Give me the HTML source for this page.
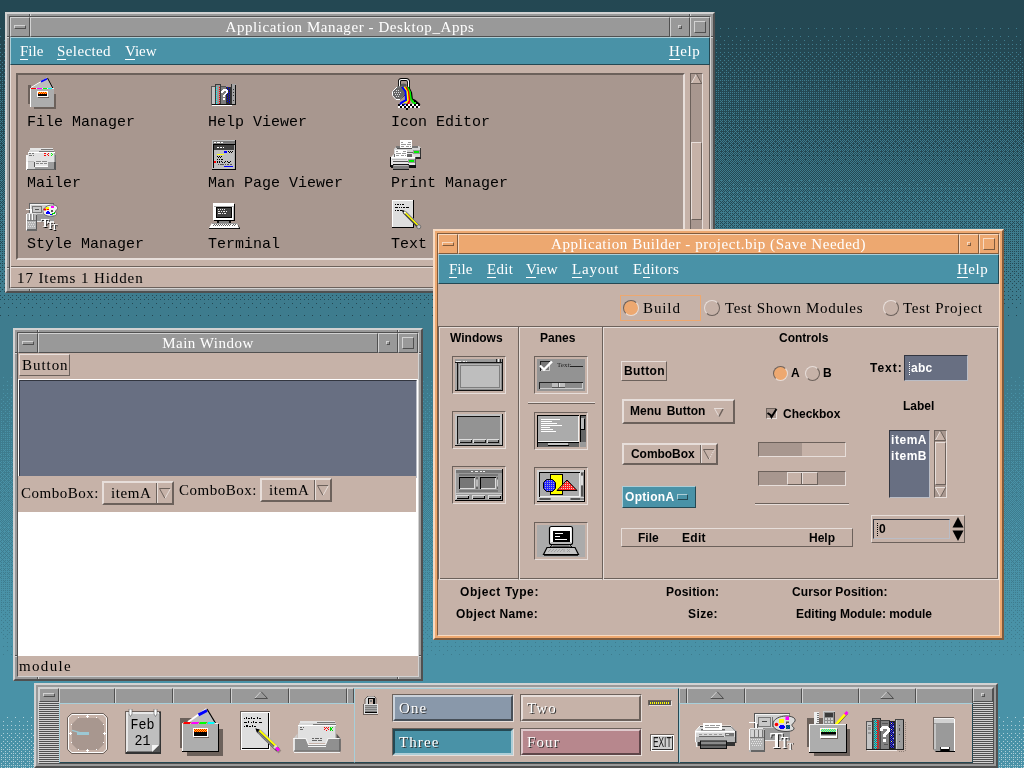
<!DOCTYPE html>
<html lang="en">
<head>
<meta charset="utf-8">
<title>CDE Desktop</title>
<style>
html,body{margin:0;padding:0}
body{width:1024px;height:768px;overflow:hidden;position:relative;background:#3E7C8E;will-change:transform;
 font-family:"Liberation Serif",serif;font-size:15px;line-height:18px;color:#000;
 --bg:#C6B2A8;--ts:#E7DEDA;--bs:#6C615B;--sel:#A8978F}
div,span{box-sizing:border-box}
.w{position:absolute;left:0;top:0;width:0;height:0}
.w div,.w span,.w svg{position:absolute}
.cP{--bg:#C6B2A8;--ts:#E7DEDA;--bs:#6C615B;--sel:#A8978F}
.cG{--bg:#999999;--ts:#D2D2D2;--bs:#505050;--sel:#828282}
.cO{--bg:#EDA870;--ts:#F7DAC2;--bs:#805B3D;--sel:#C98F5F}
.cT{--bg:#4992A7;--ts:#ADCED7;--bs:#244853;--sel:#3E7C8E}
.cD{--bg:#686F82;--ts:#BABDC6;--bs:#333640;--sel:#585E6E}
.c1{--bg:#8998AA;--ts:#CBD2DA;--bs:#474F58;--sel:#748190}
.c4{--bg:#B7878D;--ts:#DFCACD;--bs:#5F4649;--sel:#9C7378}
.f{background:var(--bg)}
.ra{background:var(--bg);border:1px solid;border-color:var(--ts) var(--bs) var(--bs) var(--ts)}
.su{background:var(--bg);border:1px solid;border-color:var(--bs) var(--ts) var(--ts) var(--bs)}
.b2{border-width:2px}
.sel{background:var(--sel)}
.nb{background:transparent}
/* window frame */
.fr{background:var(--bg);border:2px solid;border-color:var(--ts) var(--bs) var(--bs) var(--ts)}
.fi{border:1px solid;border-color:var(--bs) var(--ts) var(--ts) var(--bs)}
.tt{color:#fff;text-align:center;font-size:15px;line-height:18px;white-space:nowrap;overflow:hidden}
.mb{color:#fff;white-space:nowrap}
.mb u{text-decoration:none;border-bottom:1px solid #fff}
.t{white-space:nowrap;line-height:18px}
.mono{font-family:"Liberation Mono",monospace;font-size:15px}
.sb{font-family:"Liberation Sans",sans-serif;font-weight:bold;font-size:12px}
.rd{width:16px;height:16px;border-radius:50%;border:1px solid;border-color:var(--ts) var(--bs) var(--bs) var(--ts);transform:rotate(0deg);background:var(--bg)}
.rd.on{background:#EDA870;border-color:var(--bs) var(--ts) var(--ts) var(--bs)}
.et{border:1px solid;border-color:var(--bs) var(--ts) var(--ts) var(--bs);box-shadow:inset 1px 1px 0 var(--ts),inset -1px -1px 0 var(--bs)}
.nd{background:var(--bs)}
.nl{background:var(--ts)}
</style>
</head>
<body>
<svg id="bg" style="position:absolute;left:0;top:0" width="1024" height="768" viewBox="0 0 1024 768" shape-rendering="crispEdges">
<defs>
<pattern id="a0" width="8" height="8" patternUnits="userSpaceOnUse"><rect x="0" y="4" width="1" height="1" fill="#3E7C8E"/></pattern>
<pattern id="a1" width="8" height="8" patternUnits="userSpaceOnUse"><rect x="4" y="0" width="1" height="1" fill="#3E7C8E"/></pattern>
<pattern id="a2" width="8" height="8" patternUnits="userSpaceOnUse"><rect x="4" y="4" width="1" height="1" fill="#3E7C8E"/></pattern>
<pattern id="a3" width="8" height="8" patternUnits="userSpaceOnUse"><rect x="0" y="0" width="1" height="1" fill="#3E7C8E"/></pattern>
<pattern id="a4" width="8" height="8" patternUnits="userSpaceOnUse"><rect x="2" y="6" width="1" height="1" fill="#3E7C8E"/></pattern>
<pattern id="a5" width="8" height="8" patternUnits="userSpaceOnUse"><rect x="6" y="2" width="1" height="1" fill="#3E7C8E"/></pattern>
<pattern id="a6" width="8" height="8" patternUnits="userSpaceOnUse"><rect x="6" y="6" width="1" height="1" fill="#3E7C8E"/></pattern>
<pattern id="a7" width="8" height="8" patternUnits="userSpaceOnUse"><rect x="2" y="2" width="1" height="1" fill="#3E7C8E"/></pattern>
<pattern id="a8" width="8" height="8" patternUnits="userSpaceOnUse"><rect x="2" y="4" width="1" height="1" fill="#3E7C8E"/></pattern>
<pattern id="a9" width="8" height="8" patternUnits="userSpaceOnUse"><rect x="6" y="0" width="1" height="1" fill="#3E7C8E"/></pattern>
<pattern id="a10" width="8" height="8" patternUnits="userSpaceOnUse"><rect x="6" y="4" width="1" height="1" fill="#3E7C8E"/></pattern>
<pattern id="a11" width="8" height="8" patternUnits="userSpaceOnUse"><rect x="2" y="0" width="1" height="1" fill="#3E7C8E"/></pattern>
<pattern id="a12" width="8" height="8" patternUnits="userSpaceOnUse"><rect x="0" y="6" width="1" height="1" fill="#3E7C8E"/></pattern>
<pattern id="a13" width="8" height="8" patternUnits="userSpaceOnUse"><rect x="4" y="2" width="1" height="1" fill="#3E7C8E"/></pattern>
<pattern id="a14" width="8" height="8" patternUnits="userSpaceOnUse"><rect x="4" y="6" width="1" height="1" fill="#3E7C8E"/></pattern>
<pattern id="a15" width="8" height="8" patternUnits="userSpaceOnUse"><rect x="0" y="2" width="1" height="1" fill="#3E7C8E"/></pattern>
<pattern id="a16" width="8" height="8" patternUnits="userSpaceOnUse"><rect x="1" y="5" width="1" height="1" fill="#3E7C8E"/></pattern>
<pattern id="a17" width="8" height="8" patternUnits="userSpaceOnUse"><rect x="5" y="1" width="1" height="1" fill="#3E7C8E"/></pattern>
<pattern id="a18" width="8" height="8" patternUnits="userSpaceOnUse"><rect x="5" y="5" width="1" height="1" fill="#3E7C8E"/></pattern>
<pattern id="a19" width="8" height="8" patternUnits="userSpaceOnUse"><rect x="1" y="1" width="1" height="1" fill="#3E7C8E"/></pattern>
<pattern id="a20" width="8" height="8" patternUnits="userSpaceOnUse"><rect x="3" y="7" width="1" height="1" fill="#3E7C8E"/></pattern>
<pattern id="a21" width="8" height="8" patternUnits="userSpaceOnUse"><rect x="7" y="3" width="1" height="1" fill="#3E7C8E"/></pattern>
<pattern id="a22" width="8" height="8" patternUnits="userSpaceOnUse"><rect x="7" y="7" width="1" height="1" fill="#3E7C8E"/></pattern>
<pattern id="a23" width="8" height="8" patternUnits="userSpaceOnUse"><rect x="3" y="3" width="1" height="1" fill="#3E7C8E"/></pattern>
<pattern id="a24" width="8" height="8" patternUnits="userSpaceOnUse"><rect x="3" y="5" width="1" height="1" fill="#3E7C8E"/></pattern>
<pattern id="a25" width="8" height="8" patternUnits="userSpaceOnUse"><rect x="7" y="1" width="1" height="1" fill="#3E7C8E"/></pattern>
<pattern id="a26" width="8" height="8" patternUnits="userSpaceOnUse"><rect x="7" y="5" width="1" height="1" fill="#3E7C8E"/></pattern>
<pattern id="a27" width="8" height="8" patternUnits="userSpaceOnUse"><rect x="3" y="1" width="1" height="1" fill="#3E7C8E"/></pattern>
<pattern id="a28" width="8" height="8" patternUnits="userSpaceOnUse"><rect x="1" y="7" width="1" height="1" fill="#3E7C8E"/></pattern>
<pattern id="a29" width="8" height="8" patternUnits="userSpaceOnUse"><rect x="5" y="3" width="1" height="1" fill="#3E7C8E"/></pattern>
<pattern id="a30" width="8" height="8" patternUnits="userSpaceOnUse"><rect x="5" y="7" width="1" height="1" fill="#3E7C8E"/></pattern>
<pattern id="a31" width="8" height="8" patternUnits="userSpaceOnUse"><rect x="1" y="3" width="1" height="1" fill="#3E7C8E"/></pattern>
<pattern id="a32" width="8" height="8" patternUnits="userSpaceOnUse"><rect x="1" y="4" width="1" height="1" fill="#3E7C8E"/></pattern>
<pattern id="a33" width="8" height="8" patternUnits="userSpaceOnUse"><rect x="5" y="0" width="1" height="1" fill="#3E7C8E"/></pattern>
<pattern id="a34" width="8" height="8" patternUnits="userSpaceOnUse"><rect x="5" y="4" width="1" height="1" fill="#3E7C8E"/></pattern>
<pattern id="a35" width="8" height="8" patternUnits="userSpaceOnUse"><rect x="1" y="0" width="1" height="1" fill="#3E7C8E"/></pattern>
<pattern id="a36" width="8" height="8" patternUnits="userSpaceOnUse"><rect x="3" y="6" width="1" height="1" fill="#3E7C8E"/></pattern>
<pattern id="a37" width="8" height="8" patternUnits="userSpaceOnUse"><rect x="7" y="2" width="1" height="1" fill="#3E7C8E"/></pattern>
<pattern id="a38" width="8" height="8" patternUnits="userSpaceOnUse"><rect x="7" y="6" width="1" height="1" fill="#3E7C8E"/></pattern>
<pattern id="a39" width="8" height="8" patternUnits="userSpaceOnUse"><rect x="3" y="2" width="1" height="1" fill="#3E7C8E"/></pattern>
<pattern id="a40" width="8" height="8" patternUnits="userSpaceOnUse"><rect x="3" y="4" width="1" height="1" fill="#3E7C8E"/></pattern>
<pattern id="a41" width="8" height="8" patternUnits="userSpaceOnUse"><rect x="7" y="0" width="1" height="1" fill="#3E7C8E"/></pattern>
<pattern id="a42" width="8" height="8" patternUnits="userSpaceOnUse"><rect x="7" y="4" width="1" height="1" fill="#3E7C8E"/></pattern>
<pattern id="a43" width="8" height="8" patternUnits="userSpaceOnUse"><rect x="3" y="0" width="1" height="1" fill="#3E7C8E"/></pattern>
<pattern id="a44" width="8" height="8" patternUnits="userSpaceOnUse"><rect x="1" y="6" width="1" height="1" fill="#3E7C8E"/></pattern>
<pattern id="a45" width="8" height="8" patternUnits="userSpaceOnUse"><rect x="5" y="2" width="1" height="1" fill="#3E7C8E"/></pattern>
<pattern id="a46" width="8" height="8" patternUnits="userSpaceOnUse"><rect x="5" y="6" width="1" height="1" fill="#3E7C8E"/></pattern>
<pattern id="a47" width="8" height="8" patternUnits="userSpaceOnUse"><rect x="1" y="2" width="1" height="1" fill="#3E7C8E"/></pattern>
<pattern id="a48" width="8" height="8" patternUnits="userSpaceOnUse"><rect x="0" y="5" width="1" height="1" fill="#3E7C8E"/></pattern>
<pattern id="a49" width="8" height="8" patternUnits="userSpaceOnUse"><rect x="4" y="1" width="1" height="1" fill="#3E7C8E"/></pattern>
<pattern id="a50" width="8" height="8" patternUnits="userSpaceOnUse"><rect x="4" y="5" width="1" height="1" fill="#3E7C8E"/></pattern>
<pattern id="a51" width="8" height="8" patternUnits="userSpaceOnUse"><rect x="0" y="1" width="1" height="1" fill="#3E7C8E"/></pattern>
<pattern id="a52" width="8" height="8" patternUnits="userSpaceOnUse"><rect x="2" y="7" width="1" height="1" fill="#3E7C8E"/></pattern>
<pattern id="a53" width="8" height="8" patternUnits="userSpaceOnUse"><rect x="6" y="3" width="1" height="1" fill="#3E7C8E"/></pattern>
<pattern id="a54" width="8" height="8" patternUnits="userSpaceOnUse"><rect x="6" y="7" width="1" height="1" fill="#3E7C8E"/></pattern>
<pattern id="a55" width="8" height="8" patternUnits="userSpaceOnUse"><rect x="2" y="3" width="1" height="1" fill="#3E7C8E"/></pattern>
<pattern id="a56" width="8" height="8" patternUnits="userSpaceOnUse"><rect x="2" y="5" width="1" height="1" fill="#3E7C8E"/></pattern>
<pattern id="a57" width="8" height="8" patternUnits="userSpaceOnUse"><rect x="6" y="1" width="1" height="1" fill="#3E7C8E"/></pattern>
<pattern id="a58" width="8" height="8" patternUnits="userSpaceOnUse"><rect x="6" y="5" width="1" height="1" fill="#3E7C8E"/></pattern>
<pattern id="a59" width="8" height="8" patternUnits="userSpaceOnUse"><rect x="2" y="1" width="1" height="1" fill="#3E7C8E"/></pattern>
<pattern id="a60" width="8" height="8" patternUnits="userSpaceOnUse"><rect x="0" y="7" width="1" height="1" fill="#3E7C8E"/></pattern>
<pattern id="a61" width="8" height="8" patternUnits="userSpaceOnUse"><rect x="4" y="3" width="1" height="1" fill="#3E7C8E"/></pattern>
<pattern id="a62" width="8" height="8" patternUnits="userSpaceOnUse"><rect x="4" y="7" width="1" height="1" fill="#3E7C8E"/></pattern>
<pattern id="a63" width="8" height="8" patternUnits="userSpaceOnUse"><rect x="0" y="3" width="1" height="1" fill="#3E7C8E"/></pattern>
<pattern id="b0" width="8" height="8" patternUnits="userSpaceOnUse"><rect x="3" y="1" width="1" height="1" fill="#4992A7"/></pattern>
<pattern id="b1" width="8" height="8" patternUnits="userSpaceOnUse"><rect x="7" y="5" width="1" height="1" fill="#4992A7"/></pattern>
<pattern id="b2" width="8" height="8" patternUnits="userSpaceOnUse"><rect x="7" y="1" width="1" height="1" fill="#4992A7"/></pattern>
<pattern id="b3" width="8" height="8" patternUnits="userSpaceOnUse"><rect x="3" y="5" width="1" height="1" fill="#4992A7"/></pattern>
<pattern id="b4" width="8" height="8" patternUnits="userSpaceOnUse"><rect x="5" y="3" width="1" height="1" fill="#4992A7"/></pattern>
<pattern id="b5" width="8" height="8" patternUnits="userSpaceOnUse"><rect x="1" y="7" width="1" height="1" fill="#4992A7"/></pattern>
<pattern id="b6" width="8" height="8" patternUnits="userSpaceOnUse"><rect x="1" y="3" width="1" height="1" fill="#4992A7"/></pattern>
<pattern id="b7" width="8" height="8" patternUnits="userSpaceOnUse"><rect x="5" y="7" width="1" height="1" fill="#4992A7"/></pattern>
<pattern id="b8" width="8" height="8" patternUnits="userSpaceOnUse"><rect x="5" y="1" width="1" height="1" fill="#4992A7"/></pattern>
<pattern id="b9" width="8" height="8" patternUnits="userSpaceOnUse"><rect x="1" y="5" width="1" height="1" fill="#4992A7"/></pattern>
<pattern id="b10" width="8" height="8" patternUnits="userSpaceOnUse"><rect x="1" y="1" width="1" height="1" fill="#4992A7"/></pattern>
<pattern id="b11" width="8" height="8" patternUnits="userSpaceOnUse"><rect x="5" y="5" width="1" height="1" fill="#4992A7"/></pattern>
<pattern id="b12" width="8" height="8" patternUnits="userSpaceOnUse"><rect x="3" y="3" width="1" height="1" fill="#4992A7"/></pattern>
<pattern id="b13" width="8" height="8" patternUnits="userSpaceOnUse"><rect x="7" y="7" width="1" height="1" fill="#4992A7"/></pattern>
<pattern id="b14" width="8" height="8" patternUnits="userSpaceOnUse"><rect x="7" y="3" width="1" height="1" fill="#4992A7"/></pattern>
<pattern id="b15" width="8" height="8" patternUnits="userSpaceOnUse"><rect x="3" y="7" width="1" height="1" fill="#4992A7"/></pattern>
<pattern id="b16" width="8" height="8" patternUnits="userSpaceOnUse"><rect x="4" y="2" width="1" height="1" fill="#4992A7"/></pattern>
<pattern id="b17" width="8" height="8" patternUnits="userSpaceOnUse"><rect x="0" y="6" width="1" height="1" fill="#4992A7"/></pattern>
<pattern id="b18" width="8" height="8" patternUnits="userSpaceOnUse"><rect x="0" y="2" width="1" height="1" fill="#4992A7"/></pattern>
<pattern id="b19" width="8" height="8" patternUnits="userSpaceOnUse"><rect x="4" y="6" width="1" height="1" fill="#4992A7"/></pattern>
<pattern id="b20" width="8" height="8" patternUnits="userSpaceOnUse"><rect x="6" y="4" width="1" height="1" fill="#4992A7"/></pattern>
<pattern id="b21" width="8" height="8" patternUnits="userSpaceOnUse"><rect x="2" y="0" width="1" height="1" fill="#4992A7"/></pattern>
<pattern id="b22" width="8" height="8" patternUnits="userSpaceOnUse"><rect x="2" y="4" width="1" height="1" fill="#4992A7"/></pattern>
<pattern id="b23" width="8" height="8" patternUnits="userSpaceOnUse"><rect x="6" y="0" width="1" height="1" fill="#4992A7"/></pattern>
<pattern id="b24" width="8" height="8" patternUnits="userSpaceOnUse"><rect x="6" y="2" width="1" height="1" fill="#4992A7"/></pattern>
<pattern id="b25" width="8" height="8" patternUnits="userSpaceOnUse"><rect x="2" y="6" width="1" height="1" fill="#4992A7"/></pattern>
<pattern id="b26" width="8" height="8" patternUnits="userSpaceOnUse"><rect x="2" y="2" width="1" height="1" fill="#4992A7"/></pattern>
<pattern id="b27" width="8" height="8" patternUnits="userSpaceOnUse"><rect x="6" y="6" width="1" height="1" fill="#4992A7"/></pattern>
<pattern id="b28" width="8" height="8" patternUnits="userSpaceOnUse"><rect x="4" y="4" width="1" height="1" fill="#4992A7"/></pattern>
<pattern id="b29" width="8" height="8" patternUnits="userSpaceOnUse"><rect x="0" y="0" width="1" height="1" fill="#4992A7"/></pattern>
<pattern id="b30" width="8" height="8" patternUnits="userSpaceOnUse"><rect x="0" y="4" width="1" height="1" fill="#4992A7"/></pattern>
<pattern id="b31" width="8" height="8" patternUnits="userSpaceOnUse"><rect x="4" y="0" width="1" height="1" fill="#4992A7"/></pattern>
<pattern id="b32" width="8" height="8" patternUnits="userSpaceOnUse"><rect x="4" y="7" width="1" height="1" fill="#4992A7"/></pattern>
<pattern id="b33" width="8" height="8" patternUnits="userSpaceOnUse"><rect x="0" y="3" width="1" height="1" fill="#4992A7"/></pattern>
<pattern id="b34" width="8" height="8" patternUnits="userSpaceOnUse"><rect x="0" y="7" width="1" height="1" fill="#4992A7"/></pattern>
<pattern id="b35" width="8" height="8" patternUnits="userSpaceOnUse"><rect x="4" y="3" width="1" height="1" fill="#4992A7"/></pattern>
<pattern id="b36" width="8" height="8" patternUnits="userSpaceOnUse"><rect x="6" y="1" width="1" height="1" fill="#4992A7"/></pattern>
<pattern id="b37" width="8" height="8" patternUnits="userSpaceOnUse"><rect x="2" y="5" width="1" height="1" fill="#4992A7"/></pattern>
<pattern id="b38" width="8" height="8" patternUnits="userSpaceOnUse"><rect x="2" y="1" width="1" height="1" fill="#4992A7"/></pattern>
<pattern id="b39" width="8" height="8" patternUnits="userSpaceOnUse"><rect x="6" y="5" width="1" height="1" fill="#4992A7"/></pattern>
<pattern id="b40" width="8" height="8" patternUnits="userSpaceOnUse"><rect x="6" y="7" width="1" height="1" fill="#4992A7"/></pattern>
<pattern id="b41" width="8" height="8" patternUnits="userSpaceOnUse"><rect x="2" y="3" width="1" height="1" fill="#4992A7"/></pattern>
<pattern id="b42" width="8" height="8" patternUnits="userSpaceOnUse"><rect x="2" y="7" width="1" height="1" fill="#4992A7"/></pattern>
<pattern id="b43" width="8" height="8" patternUnits="userSpaceOnUse"><rect x="6" y="3" width="1" height="1" fill="#4992A7"/></pattern>
<pattern id="b44" width="8" height="8" patternUnits="userSpaceOnUse"><rect x="4" y="1" width="1" height="1" fill="#4992A7"/></pattern>
<pattern id="b45" width="8" height="8" patternUnits="userSpaceOnUse"><rect x="0" y="5" width="1" height="1" fill="#4992A7"/></pattern>
<pattern id="b46" width="8" height="8" patternUnits="userSpaceOnUse"><rect x="0" y="1" width="1" height="1" fill="#4992A7"/></pattern>
<pattern id="b47" width="8" height="8" patternUnits="userSpaceOnUse"><rect x="4" y="5" width="1" height="1" fill="#4992A7"/></pattern>
<pattern id="b48" width="8" height="8" patternUnits="userSpaceOnUse"><rect x="3" y="0" width="1" height="1" fill="#4992A7"/></pattern>
<pattern id="b49" width="8" height="8" patternUnits="userSpaceOnUse"><rect x="7" y="4" width="1" height="1" fill="#4992A7"/></pattern>
<pattern id="b50" width="8" height="8" patternUnits="userSpaceOnUse"><rect x="7" y="0" width="1" height="1" fill="#4992A7"/></pattern>
<pattern id="b51" width="8" height="8" patternUnits="userSpaceOnUse"><rect x="3" y="4" width="1" height="1" fill="#4992A7"/></pattern>
<pattern id="b52" width="8" height="8" patternUnits="userSpaceOnUse"><rect x="5" y="2" width="1" height="1" fill="#4992A7"/></pattern>
<pattern id="b53" width="8" height="8" patternUnits="userSpaceOnUse"><rect x="1" y="6" width="1" height="1" fill="#4992A7"/></pattern>
<pattern id="b54" width="8" height="8" patternUnits="userSpaceOnUse"><rect x="1" y="2" width="1" height="1" fill="#4992A7"/></pattern>
<pattern id="b55" width="8" height="8" patternUnits="userSpaceOnUse"><rect x="5" y="6" width="1" height="1" fill="#4992A7"/></pattern>
<pattern id="b56" width="8" height="8" patternUnits="userSpaceOnUse"><rect x="5" y="0" width="1" height="1" fill="#4992A7"/></pattern>
<pattern id="b57" width="8" height="8" patternUnits="userSpaceOnUse"><rect x="1" y="4" width="1" height="1" fill="#4992A7"/></pattern>
<pattern id="b58" width="8" height="8" patternUnits="userSpaceOnUse"><rect x="1" y="0" width="1" height="1" fill="#4992A7"/></pattern>
<pattern id="b59" width="8" height="8" patternUnits="userSpaceOnUse"><rect x="5" y="4" width="1" height="1" fill="#4992A7"/></pattern>
<pattern id="b60" width="8" height="8" patternUnits="userSpaceOnUse"><rect x="3" y="2" width="1" height="1" fill="#4992A7"/></pattern>
<pattern id="b61" width="8" height="8" patternUnits="userSpaceOnUse"><rect x="7" y="6" width="1" height="1" fill="#4992A7"/></pattern>
<pattern id="b62" width="8" height="8" patternUnits="userSpaceOnUse"><rect x="7" y="2" width="1" height="1" fill="#4992A7"/></pattern>
<pattern id="b63" width="8" height="8" patternUnits="userSpaceOnUse"><rect x="3" y="6" width="1" height="1" fill="#4992A7"/></pattern>
<pattern id="c0" width="8" height="8" patternUnits="userSpaceOnUse"><rect x="7" y="5" width="1" height="1" fill="#ADCED7"/></pattern>
<pattern id="c1" width="8" height="8" patternUnits="userSpaceOnUse"><rect x="3" y="1" width="1" height="1" fill="#ADCED7"/></pattern>
<pattern id="c2" width="8" height="8" patternUnits="userSpaceOnUse"><rect x="3" y="5" width="1" height="1" fill="#ADCED7"/></pattern>
<pattern id="c3" width="8" height="8" patternUnits="userSpaceOnUse"><rect x="7" y="1" width="1" height="1" fill="#ADCED7"/></pattern>
<pattern id="c4" width="8" height="8" patternUnits="userSpaceOnUse"><rect x="1" y="7" width="1" height="1" fill="#ADCED7"/></pattern>
<pattern id="c5" width="8" height="8" patternUnits="userSpaceOnUse"><rect x="5" y="3" width="1" height="1" fill="#ADCED7"/></pattern>
<pattern id="c6" width="8" height="8" patternUnits="userSpaceOnUse"><rect x="5" y="7" width="1" height="1" fill="#ADCED7"/></pattern>
<pattern id="c7" width="8" height="8" patternUnits="userSpaceOnUse"><rect x="1" y="3" width="1" height="1" fill="#ADCED7"/></pattern>
<pattern id="c8" width="8" height="8" patternUnits="userSpaceOnUse"><rect x="1" y="5" width="1" height="1" fill="#ADCED7"/></pattern>
<pattern id="c9" width="8" height="8" patternUnits="userSpaceOnUse"><rect x="5" y="1" width="1" height="1" fill="#ADCED7"/></pattern>
<pattern id="c10" width="8" height="8" patternUnits="userSpaceOnUse"><rect x="5" y="5" width="1" height="1" fill="#ADCED7"/></pattern>
<pattern id="c11" width="8" height="8" patternUnits="userSpaceOnUse"><rect x="1" y="1" width="1" height="1" fill="#ADCED7"/></pattern>
<pattern id="c12" width="8" height="8" patternUnits="userSpaceOnUse"><rect x="7" y="7" width="1" height="1" fill="#ADCED7"/></pattern>
<pattern id="c13" width="8" height="8" patternUnits="userSpaceOnUse"><rect x="3" y="3" width="1" height="1" fill="#ADCED7"/></pattern>
<pattern id="c14" width="8" height="8" patternUnits="userSpaceOnUse"><rect x="3" y="7" width="1" height="1" fill="#ADCED7"/></pattern>
<pattern id="c15" width="8" height="8" patternUnits="userSpaceOnUse"><rect x="7" y="3" width="1" height="1" fill="#ADCED7"/></pattern>
<pattern id="c16" width="8" height="8" patternUnits="userSpaceOnUse"><rect x="0" y="6" width="1" height="1" fill="#ADCED7"/></pattern>
<pattern id="c17" width="8" height="8" patternUnits="userSpaceOnUse"><rect x="4" y="2" width="1" height="1" fill="#ADCED7"/></pattern>
<pattern id="c18" width="8" height="8" patternUnits="userSpaceOnUse"><rect x="4" y="6" width="1" height="1" fill="#ADCED7"/></pattern>
<pattern id="c19" width="8" height="8" patternUnits="userSpaceOnUse"><rect x="0" y="2" width="1" height="1" fill="#ADCED7"/></pattern>
<pattern id="c20" width="8" height="8" patternUnits="userSpaceOnUse"><rect x="2" y="0" width="1" height="1" fill="#ADCED7"/></pattern>
<pattern id="c21" width="8" height="8" patternUnits="userSpaceOnUse"><rect x="6" y="4" width="1" height="1" fill="#ADCED7"/></pattern>
<pattern id="c22" width="8" height="8" patternUnits="userSpaceOnUse"><rect x="6" y="0" width="1" height="1" fill="#ADCED7"/></pattern>
<pattern id="c23" width="8" height="8" patternUnits="userSpaceOnUse"><rect x="2" y="4" width="1" height="1" fill="#ADCED7"/></pattern>
<pattern id="c24" width="8" height="8" patternUnits="userSpaceOnUse"><rect x="2" y="6" width="1" height="1" fill="#ADCED7"/></pattern>
<pattern id="c25" width="8" height="8" patternUnits="userSpaceOnUse"><rect x="6" y="2" width="1" height="1" fill="#ADCED7"/></pattern>
<pattern id="c26" width="8" height="8" patternUnits="userSpaceOnUse"><rect x="6" y="6" width="1" height="1" fill="#ADCED7"/></pattern>
<pattern id="c27" width="8" height="8" patternUnits="userSpaceOnUse"><rect x="2" y="2" width="1" height="1" fill="#ADCED7"/></pattern>
<pattern id="c28" width="8" height="8" patternUnits="userSpaceOnUse"><rect x="0" y="0" width="1" height="1" fill="#ADCED7"/></pattern>
<pattern id="c29" width="8" height="8" patternUnits="userSpaceOnUse"><rect x="4" y="4" width="1" height="1" fill="#ADCED7"/></pattern>
<pattern id="c30" width="8" height="8" patternUnits="userSpaceOnUse"><rect x="4" y="0" width="1" height="1" fill="#ADCED7"/></pattern>
<pattern id="c31" width="8" height="8" patternUnits="userSpaceOnUse"><rect x="0" y="4" width="1" height="1" fill="#ADCED7"/></pattern>
<pattern id="c32" width="8" height="8" patternUnits="userSpaceOnUse"><rect x="0" y="5" width="1" height="1" fill="#ADCED7"/></pattern>
<pattern id="c33" width="8" height="8" patternUnits="userSpaceOnUse"><rect x="4" y="1" width="1" height="1" fill="#ADCED7"/></pattern>
<pattern id="c34" width="8" height="8" patternUnits="userSpaceOnUse"><rect x="4" y="5" width="1" height="1" fill="#ADCED7"/></pattern>
<pattern id="c35" width="8" height="8" patternUnits="userSpaceOnUse"><rect x="0" y="1" width="1" height="1" fill="#ADCED7"/></pattern>
<pattern id="c36" width="8" height="8" patternUnits="userSpaceOnUse"><rect x="2" y="7" width="1" height="1" fill="#ADCED7"/></pattern>
<pattern id="c37" width="8" height="8" patternUnits="userSpaceOnUse"><rect x="6" y="3" width="1" height="1" fill="#ADCED7"/></pattern>
<pattern id="c38" width="8" height="8" patternUnits="userSpaceOnUse"><rect x="6" y="7" width="1" height="1" fill="#ADCED7"/></pattern>
<pattern id="c39" width="8" height="8" patternUnits="userSpaceOnUse"><rect x="2" y="3" width="1" height="1" fill="#ADCED7"/></pattern>
<pattern id="c40" width="8" height="8" patternUnits="userSpaceOnUse"><rect x="2" y="5" width="1" height="1" fill="#ADCED7"/></pattern>
<pattern id="c41" width="8" height="8" patternUnits="userSpaceOnUse"><rect x="6" y="1" width="1" height="1" fill="#ADCED7"/></pattern>
<pattern id="c42" width="8" height="8" patternUnits="userSpaceOnUse"><rect x="6" y="5" width="1" height="1" fill="#ADCED7"/></pattern>
<pattern id="c43" width="8" height="8" patternUnits="userSpaceOnUse"><rect x="2" y="1" width="1" height="1" fill="#ADCED7"/></pattern>
<pattern id="c44" width="8" height="8" patternUnits="userSpaceOnUse"><rect x="0" y="7" width="1" height="1" fill="#ADCED7"/></pattern>
<pattern id="c45" width="8" height="8" patternUnits="userSpaceOnUse"><rect x="4" y="3" width="1" height="1" fill="#ADCED7"/></pattern>
<pattern id="c46" width="8" height="8" patternUnits="userSpaceOnUse"><rect x="4" y="7" width="1" height="1" fill="#ADCED7"/></pattern>
<pattern id="c47" width="8" height="8" patternUnits="userSpaceOnUse"><rect x="0" y="3" width="1" height="1" fill="#ADCED7"/></pattern>
<pattern id="c48" width="8" height="8" patternUnits="userSpaceOnUse"><rect x="7" y="6" width="1" height="1" fill="#ADCED7"/></pattern>
<pattern id="c49" width="8" height="8" patternUnits="userSpaceOnUse"><rect x="3" y="2" width="1" height="1" fill="#ADCED7"/></pattern>
<pattern id="c50" width="8" height="8" patternUnits="userSpaceOnUse"><rect x="3" y="6" width="1" height="1" fill="#ADCED7"/></pattern>
<pattern id="c51" width="8" height="8" patternUnits="userSpaceOnUse"><rect x="7" y="2" width="1" height="1" fill="#ADCED7"/></pattern>
<pattern id="c52" width="8" height="8" patternUnits="userSpaceOnUse"><rect x="1" y="0" width="1" height="1" fill="#ADCED7"/></pattern>
<pattern id="c53" width="8" height="8" patternUnits="userSpaceOnUse"><rect x="5" y="4" width="1" height="1" fill="#ADCED7"/></pattern>
<pattern id="c54" width="8" height="8" patternUnits="userSpaceOnUse"><rect x="5" y="0" width="1" height="1" fill="#ADCED7"/></pattern>
<pattern id="c55" width="8" height="8" patternUnits="userSpaceOnUse"><rect x="1" y="4" width="1" height="1" fill="#ADCED7"/></pattern>
<pattern id="c56" width="8" height="8" patternUnits="userSpaceOnUse"><rect x="1" y="6" width="1" height="1" fill="#ADCED7"/></pattern>
<pattern id="c57" width="8" height="8" patternUnits="userSpaceOnUse"><rect x="5" y="2" width="1" height="1" fill="#ADCED7"/></pattern>
<pattern id="c58" width="8" height="8" patternUnits="userSpaceOnUse"><rect x="5" y="6" width="1" height="1" fill="#ADCED7"/></pattern>
<pattern id="c59" width="8" height="8" patternUnits="userSpaceOnUse"><rect x="1" y="2" width="1" height="1" fill="#ADCED7"/></pattern>
<pattern id="c60" width="8" height="8" patternUnits="userSpaceOnUse"><rect x="7" y="0" width="1" height="1" fill="#ADCED7"/></pattern>
<pattern id="c61" width="8" height="8" patternUnits="userSpaceOnUse"><rect x="3" y="4" width="1" height="1" fill="#ADCED7"/></pattern>
<pattern id="c62" width="8" height="8" patternUnits="userSpaceOnUse"><rect x="3" y="0" width="1" height="1" fill="#ADCED7"/></pattern>
<pattern id="c63" width="8" height="8" patternUnits="userSpaceOnUse"><rect x="7" y="4" width="1" height="1" fill="#ADCED7"/></pattern>
</defs>
<rect width="1024" height="320" fill="#244853"/>
<rect y="320" width="1024" height="340" fill="#3E7C8E"/>
<rect y="660" width="1024" height="108" fill="#4992A7"/>
<rect y="28" width="1024" height="292" fill="url(#a0)"/>
<rect y="33" width="1024" height="287" fill="url(#a1)"/>
<rect y="38" width="1024" height="282" fill="url(#a2)"/>
<rect y="42" width="1024" height="278" fill="url(#a3)"/>
<rect y="47" width="1024" height="273" fill="url(#a4)"/>
<rect y="51" width="1024" height="269" fill="url(#a5)"/>
<rect y="56" width="1024" height="264" fill="url(#a6)"/>
<rect y="60" width="1024" height="260" fill="url(#a7)"/>
<rect y="65" width="1024" height="255" fill="url(#a8)"/>
<rect y="70" width="1024" height="250" fill="url(#a9)"/>
<rect y="74" width="1024" height="246" fill="url(#a10)"/>
<rect y="79" width="1024" height="241" fill="url(#a11)"/>
<rect y="83" width="1024" height="237" fill="url(#a12)"/>
<rect y="88" width="1024" height="232" fill="url(#a13)"/>
<rect y="92" width="1024" height="228" fill="url(#a14)"/>
<rect y="97" width="1024" height="223" fill="url(#a15)"/>
<rect y="101" width="1024" height="219" fill="url(#a16)"/>
<rect y="106" width="1024" height="214" fill="url(#a17)"/>
<rect y="111" width="1024" height="209" fill="url(#a18)"/>
<rect y="115" width="1024" height="205" fill="url(#a19)"/>
<rect y="120" width="1024" height="200" fill="url(#a20)"/>
<rect y="124" width="1024" height="196" fill="url(#a21)"/>
<rect y="129" width="1024" height="191" fill="url(#a22)"/>
<rect y="133" width="1024" height="187" fill="url(#a23)"/>
<rect y="138" width="1024" height="182" fill="url(#a24)"/>
<rect y="143" width="1024" height="177" fill="url(#a25)"/>
<rect y="147" width="1024" height="173" fill="url(#a26)"/>
<rect y="152" width="1024" height="168" fill="url(#a27)"/>
<rect y="156" width="1024" height="164" fill="url(#a28)"/>
<rect y="161" width="1024" height="159" fill="url(#a29)"/>
<rect y="165" width="1024" height="155" fill="url(#a30)"/>
<rect y="170" width="1024" height="150" fill="url(#a31)"/>
<rect y="174" width="1024" height="146" fill="url(#a32)"/>
<rect y="179" width="1024" height="141" fill="url(#a33)"/>
<rect y="184" width="1024" height="136" fill="url(#a34)"/>
<rect y="188" width="1024" height="132" fill="url(#a35)"/>
<rect y="193" width="1024" height="127" fill="url(#a36)"/>
<rect y="197" width="1024" height="123" fill="url(#a37)"/>
<rect y="202" width="1024" height="118" fill="url(#a38)"/>
<rect y="206" width="1024" height="114" fill="url(#a39)"/>
<rect y="211" width="1024" height="109" fill="url(#a40)"/>
<rect y="216" width="1024" height="104" fill="url(#a41)"/>
<rect y="220" width="1024" height="100" fill="url(#a42)"/>
<rect y="225" width="1024" height="95" fill="url(#a43)"/>
<rect y="229" width="1024" height="91" fill="url(#a44)"/>
<rect y="234" width="1024" height="86" fill="url(#a45)"/>
<rect y="238" width="1024" height="82" fill="url(#a46)"/>
<rect y="243" width="1024" height="77" fill="url(#a47)"/>
<rect y="247" width="1024" height="73" fill="url(#a48)"/>
<rect y="252" width="1024" height="68" fill="url(#a49)"/>
<rect y="257" width="1024" height="63" fill="url(#a50)"/>
<rect y="261" width="1024" height="59" fill="url(#a51)"/>
<rect y="266" width="1024" height="54" fill="url(#a52)"/>
<rect y="270" width="1024" height="50" fill="url(#a53)"/>
<rect y="275" width="1024" height="45" fill="url(#a54)"/>
<rect y="279" width="1024" height="41" fill="url(#a55)"/>
<rect y="284" width="1024" height="36" fill="url(#a56)"/>
<rect y="289" width="1024" height="31" fill="url(#a57)"/>
<rect y="293" width="1024" height="27" fill="url(#a58)"/>
<rect y="298" width="1024" height="22" fill="url(#a59)"/>
<rect y="302" width="1024" height="18" fill="url(#a60)"/>
<rect y="307" width="1024" height="13" fill="url(#a61)"/>
<rect y="311" width="1024" height="9" fill="url(#a62)"/>
<rect y="316" width="1024" height="4" fill="url(#a63)"/>
<rect y="372" width="1024" height="288" fill="url(#b0)"/>
<rect y="377" width="1024" height="283" fill="url(#b1)"/>
<rect y="381" width="1024" height="279" fill="url(#b2)"/>
<rect y="386" width="1024" height="274" fill="url(#b3)"/>
<rect y="390" width="1024" height="270" fill="url(#b4)"/>
<rect y="395" width="1024" height="265" fill="url(#b5)"/>
<rect y="399" width="1024" height="261" fill="url(#b6)"/>
<rect y="404" width="1024" height="256" fill="url(#b7)"/>
<rect y="408" width="1024" height="252" fill="url(#b8)"/>
<rect y="413" width="1024" height="247" fill="url(#b9)"/>
<rect y="417" width="1024" height="243" fill="url(#b10)"/>
<rect y="422" width="1024" height="238" fill="url(#b11)"/>
<rect y="426" width="1024" height="234" fill="url(#b12)"/>
<rect y="431" width="1024" height="229" fill="url(#b13)"/>
<rect y="435" width="1024" height="225" fill="url(#b14)"/>
<rect y="440" width="1024" height="220" fill="url(#b15)"/>
<rect y="444" width="1024" height="216" fill="url(#b16)"/>
<rect y="449" width="1024" height="211" fill="url(#b17)"/>
<rect y="453" width="1024" height="207" fill="url(#b18)"/>
<rect y="458" width="1024" height="202" fill="url(#b19)"/>
<rect y="462" width="1024" height="198" fill="url(#b20)"/>
<rect y="467" width="1024" height="193" fill="url(#b21)"/>
<rect y="471" width="1024" height="189" fill="url(#b22)"/>
<rect y="476" width="1024" height="184" fill="url(#b23)"/>
<rect y="480" width="1024" height="180" fill="url(#b24)"/>
<rect y="485" width="1024" height="175" fill="url(#b25)"/>
<rect y="489" width="1024" height="171" fill="url(#b26)"/>
<rect y="494" width="1024" height="166" fill="url(#b27)"/>
<rect y="498" width="1024" height="162" fill="url(#b28)"/>
<rect y="503" width="1024" height="157" fill="url(#b29)"/>
<rect y="507" width="1024" height="153" fill="url(#b30)"/>
<rect y="512" width="1024" height="148" fill="url(#b31)"/>
<rect y="516" width="1024" height="144" fill="url(#b32)"/>
<rect y="521" width="1024" height="139" fill="url(#b33)"/>
<rect y="525" width="1024" height="135" fill="url(#b34)"/>
<rect y="530" width="1024" height="130" fill="url(#b35)"/>
<rect y="534" width="1024" height="126" fill="url(#b36)"/>
<rect y="539" width="1024" height="121" fill="url(#b37)"/>
<rect y="543" width="1024" height="117" fill="url(#b38)"/>
<rect y="548" width="1024" height="112" fill="url(#b39)"/>
<rect y="552" width="1024" height="108" fill="url(#b40)"/>
<rect y="557" width="1024" height="103" fill="url(#b41)"/>
<rect y="561" width="1024" height="99" fill="url(#b42)"/>
<rect y="566" width="1024" height="94" fill="url(#b43)"/>
<rect y="570" width="1024" height="90" fill="url(#b44)"/>
<rect y="575" width="1024" height="85" fill="url(#b45)"/>
<rect y="579" width="1024" height="81" fill="url(#b46)"/>
<rect y="584" width="1024" height="76" fill="url(#b47)"/>
<rect y="588" width="1024" height="72" fill="url(#b48)"/>
<rect y="593" width="1024" height="67" fill="url(#b49)"/>
<rect y="597" width="1024" height="63" fill="url(#b50)"/>
<rect y="602" width="1024" height="58" fill="url(#b51)"/>
<rect y="606" width="1024" height="54" fill="url(#b52)"/>
<rect y="611" width="1024" height="49" fill="url(#b53)"/>
<rect y="615" width="1024" height="45" fill="url(#b54)"/>
<rect y="620" width="1024" height="40" fill="url(#b55)"/>
<rect y="624" width="1024" height="36" fill="url(#b56)"/>
<rect y="629" width="1024" height="31" fill="url(#b57)"/>
<rect y="633" width="1024" height="27" fill="url(#b58)"/>
<rect y="638" width="1024" height="22" fill="url(#b59)"/>
<rect y="642" width="1024" height="18" fill="url(#b60)"/>
<rect y="647" width="1024" height="13" fill="url(#b61)"/>
<rect y="651" width="1024" height="9" fill="url(#b62)"/>
<rect y="656" width="1024" height="4" fill="url(#b63)"/>
<rect y="712" width="1024" height="56" fill="url(#c0)"/>
<rect y="717" width="1024" height="51" fill="url(#c1)"/>
<rect y="721" width="1024" height="47" fill="url(#c2)"/>
<rect y="726" width="1024" height="42" fill="url(#c3)"/>
<rect y="730" width="1024" height="38" fill="url(#c4)"/>
<rect y="735" width="1024" height="33" fill="url(#c5)"/>
<rect y="739" width="1024" height="29" fill="url(#c6)"/>
<rect y="744" width="1024" height="24" fill="url(#c7)"/>
<rect y="748" width="1024" height="20" fill="url(#c8)"/>
<rect y="753" width="1024" height="15" fill="url(#c9)"/>
<rect y="757" width="1024" height="11" fill="url(#c10)"/>
<rect y="762" width="1024" height="6" fill="url(#c11)"/>
<rect y="766" width="1024" height="2" fill="url(#c12)"/>
</svg>
<div class="w cG" id="appman">
 <div class="fr" style="left:5px;top:12px;width:710px;height:281px"></div>
 <div class="nd" style="left:29px;top:14px;width:1px;height:2px"></div><div class="nl" style="left:30px;top:14px;width:1px;height:2px"></div>
 <div class="nd" style="left:689px;top:14px;width:1px;height:2px"></div><div class="nl" style="left:690px;top:14px;width:1px;height:2px"></div>
 <div class="nd" style="left:29px;top:289px;width:1px;height:2px"></div><div class="nl" style="left:30px;top:289px;width:1px;height:2px"></div>
 <div class="nd" style="left:689px;top:289px;width:1px;height:2px"></div><div class="nl" style="left:690px;top:289px;width:1px;height:2px"></div>
 <div class="nd" style="left:7px;top:36px;width:2px;height:1px"></div><div class="nl" style="left:7px;top:37px;width:2px;height:1px"></div>
 <div class="nd" style="left:711px;top:36px;width:2px;height:1px"></div><div class="nl" style="left:711px;top:37px;width:2px;height:1px"></div>
 <div class="nd" style="left:7px;top:267px;width:2px;height:1px"></div><div class="nl" style="left:7px;top:268px;width:2px;height:1px"></div>
 <div class="nd" style="left:711px;top:267px;width:2px;height:1px"></div><div class="nl" style="left:711px;top:268px;width:2px;height:1px"></div>
 <div class="fi" style="left:9px;top:16px;width:702px;height:273px"></div>
 <div class="ra" style="left:10px;top:17px;width:20px;height:20px"><div class="ra" style="left:3px;top:7px;width:12px;height:4px"></div></div>
 <div class="ra tt" style="left:30px;top:17px;width:640px;height:20px;letter-spacing:.57px">Application Manager - Desktop_Apps</div>
 <div class="ra" style="left:670px;top:17px;width:20px;height:20px"><div class="ra" style="left:7px;top:7px;width:4px;height:4px"></div></div>
 <div class="ra" style="left:690px;top:17px;width:20px;height:20px"><div class="ra" style="left:3px;top:3px;width:12px;height:12px"></div></div>
 <!-- client -->
 <div class="ra cP" style="left:10px;top:37px;width:700px;height:251px"></div>
 <div class="ra cT mb" style="left:10px;top:37px;width:700px;height:28px">
  <span class="t" style="left:9px;top:4px"><u>F</u>ile</span>
  <span class="t" style="left:46px;top:4px;letter-spacing:.4px"><u>S</u>elected</span>
  <span class="t" style="left:114px;top:4px"><u>V</u>iew</span>
  <span class="t" style="left:658px;top:4px;letter-spacing:.5px"><u>H</u>elp</span>
 </div>
 <div class="cP">
  <div class="su b2 sel" style="left:16px;top:73px;width:669px;height:187px"></div>
  <div class="su sel" style="left:690px;top:73px;width:13px;height:187px"></div>
  <div class="ra" style="left:691px;top:142px;width:11px;height:78px"></div>
  <svg style="left:691px;top:74px" width="11" height="10" viewBox="0 0 11 10"><path d="M5.5 0L11 10H0Z" fill="#C6B2A8"/><path d="M5.5 0L0 10" stroke="#E7DEDA" fill="none"/><path d="M5.5 0L11 10M0 9.5H11" stroke="#6C615B" fill="none"/></svg>
  <div class="nd" style="left:11px;top:266px;width:698px;height:1px"></div><div class="nl" style="left:11px;top:267px;width:698px;height:1px"></div>
  <span class="t" style="left:17px;top:269px;letter-spacing:.9px">17 Items 1 Hidden</span>
  <span class="t mono" style="left:27px;top:114px">File Manager</span>
  <span class="t mono" style="left:208px;top:114px">Help Viewer</span>
  <span class="t mono" style="left:391px;top:114px">Icon Editor</span>
  <span class="t mono" style="left:27px;top:175px">Mailer</span>
  <span class="t mono" style="left:208px;top:175px">Man Page Viewer</span>
  <span class="t mono" style="left:391px;top:175px">Print Manager</span>
  <span class="t mono" style="left:27px;top:236px">Style Manager</span>
  <span class="t mono" style="left:208px;top:236px">Terminal</span>
  <span class="t mono" style="left:391px;top:236px">Text</span>
 </div>
</div>
<div class="w" id="appicons">
<!-- File Manager -->
<svg style="left:27px;top:77px" width="32" height="32" viewBox="0 0 32 32" shape-rendering="crispEdges">
 <rect x="1" y="8" width="3" height="19" fill="#6C615B"/>
 <path d="M4 11L20 1L26 11Z" fill="#BDBDBD" shape-rendering="auto"/>
 <path d="M4 10.5L20 1" stroke="#fff" fill="none" shape-rendering="auto"/>
 <path d="M20.5 1L26 11.5" stroke="#000" fill="none" shape-rendering="auto"/>
 <path d="M14 4.8L20 1.8" stroke="#00f" stroke-width="1.6" fill="none" shape-rendering="auto"/>
 <rect x="3" y="12" width="24" height="18" fill="#ADADAD"/>
 <rect x="3" y="12" width="1" height="18" fill="#fff"/><rect x="3" y="11" width="24" height="1" fill="#eee"/>
 <rect x="27" y="17" width="2" height="15" fill="#6C615B"/><rect x="7" y="30" width="22" height="2" fill="#6C615B"/>
 <rect x="4" y="11" width="5" height="1" fill="#f00"/><rect x="10" y="11" width="5" height="1" fill="#f0f"/><rect x="16" y="11" width="4" height="1" fill="#0f0"/><rect x="21" y="11" width="4" height="1" fill="#0ff"/>
 <rect x="10" y="14" width="11" height="6" fill="#fff"/><rect x="11" y="15" width="9" height="2" fill="#ffdc00"/><rect x="11" y="17" width="9" height="2" fill="#000"/>
 <path d="M11 16h1v1h-1zM13 16h1v1h-1zM15 16h1v1h-1zM17 16h1v1h-1zM19 16h1v1h-1zM12 15h1v1h-1zM14 15h1v1h-1zM16 15h1v1h-1zM18 15h1v1h-1z" fill="#f00"/>
 <rect x="11" y="20" width="11" height="1" fill="#6C615B"/>
</svg>
<!-- Help Viewer -->
<svg style="left:211px;top:84px" width="26" height="23" viewBox="0 0 26 23" shape-rendering="crispEdges">
 <rect x="0" y="2" width="5" height="19" fill="#555"/><rect x="1" y="3" width="3" height="18" fill="#C4C4C4"/>
 <rect x="4" y="0" width="6" height="21" fill="#3a3a3a"/><rect x="5" y="1" width="4" height="20" fill="#9a9a9a"/>
 <path d="M5 3h1v1h-1zM5 5h1v1h-1zM5 7h1v1h-1zM5 9h1v1h-1zM5 11h1v1h-1zM5 13h1v1h-1zM5 15h1v1h-1zM5 17h1v1h-1zM5 19h1v1h-1z" fill="#0ff"/>
 <path d="M8 3h1v1h-1zM8 5h1v1h-1zM8 7h1v1h-1zM8 9h1v1h-1zM8 11h1v1h-1zM8 13h1v1h-1zM8 15h1v1h-1zM8 17h1v1h-1zM8 19h1v1h-1z" fill="#f00"/>
 <rect x="10" y="2" width="5" height="19" fill="#7d7d7d"/><rect x="10" y="2" width="5" height="1" fill="#555"/>
 <rect x="15" y="3" width="5" height="18" fill="#2e2e2e"/>
 <path d="M16 3h1v1h-1zM16 5h1v1h-1zM16 7h1v1h-1zM16 9h1v1h-1zM16 11h1v1h-1zM16 13h1v1h-1zM16 15h1v1h-1zM16 17h1v1h-1zM18 4h1v1h-1zM18 6h1v1h-1zM18 8h1v1h-1zM18 10h1v1h-1zM18 12h1v1h-1zM18 14h1v1h-1zM18 16h1v1h-1zM18 18h1v1h-1z" fill="#00f"/>
 <rect x="20" y="0" width="5" height="21" fill="#a4a4a4"/><rect x="24" y="1" width="1" height="20" fill="#111"/><rect x="20" y="0" width="1" height="21" fill="#333"/>
 <path d="M22 5h1v1h-1zM22 8h1v1h-1zM22 11h1v1h-1zM22 16h1v1h-1z" fill="#333"/>
 <rect x="1" y="20" width="24" height="1" fill="#111"/><rect x="1" y="21" width="20" height="1" fill="#fff"/>
 <path d="M10 7h1v-1h1v-1h4v1h1v3h-1v1h-1v1h-1v2h-2v-2h1v-1h1v-1h1v-2h-2v1h-1v1h-2zM12 14h2v2h-2z" fill="#fff"/>
</svg>
<!-- Icon Editor -->
<svg style="left:391px;top:78px" width="30" height="32" viewBox="0 0 30 32">
 <path d="M8.5 14V3.5Q8.5 1.5 10.5 1.5H15Q17.5 1.5 17.5 4V10" fill="none" stroke="#000" stroke-width="3"/>
 <path d="M8.5 14V3.5Q8.5 1.5 10.5 1.5H15Q17.5 1.5 17.5 4V10" fill="none" stroke="#fff" stroke-width="1.2"/>
 <path d="M1.5 13.5L6 9H10L14 12V17L9 21.5H5L1.500 17.5Z" fill="#666" stroke="#fff" stroke-width="1"/>
 <path d="M6 9H10L14 12V17L9 21.500" fill="none" stroke="#333" stroke-width="1"/>
 <path d="M3 14h1v1h-1zM5 14h1v1h-1zM7 14h1v1h-1zM4 16h1v1h-1zM6 16h1v1h-1zM8 16h1v1h-1zM5 12h1v1h-1zM7 12h1v1h-1zM9 14h1v1h-1zM5 18h1v1h-1zM7 18h1v1h-1z" fill="#ddd"/>
 <ellipse cx="12.500" cy="7.300" rx="3.200" ry="1.700" fill="#5a5a5a"/>
 <path d="M17.500 9L20.300 14.800L21.100 21.100L24.200 22.600L28.900 26.800" fill="none" stroke="#000" stroke-width="1.600"/>
 <path d="M16.200 9L18.800 13.800L19.800 21.100L22.200 24.200L25.300 26.300" fill="none" stroke="#0e0" stroke-width="2"/>
 <path d="M14.600 9L17.200 13.800L18.300 22.100L17.500 25.200L16.700 26.800" fill="none" stroke="#f00" stroke-width="2"/>
 <path d="M13 9L15.900 13.800L16.700 22.100L13.800 25.200L13 27.300" fill="none" stroke="#ff0" stroke-width="2"/>
 <path d="M11.200 9L14.400 13.300L15.100 22.100L10.200 24.700L9.100 27.300" fill="none" stroke="#00f" stroke-width="2"/>
 <g shape-rendering="crispEdges"><rect x="7" y="26" width="22" height="4" fill="#fff"/>
 <path d="M7 26h2v2h-2zM11 26h2v2h-2zM15 26h2v2h-2zM19 26h2v2h-2zM23 26h2v2h-2zM27 26h2v2h-2zM9 28h2v2h-2zM13 28h2v2h-2zM17 28h2v2h-2zM21 28h2v2h-2zM25 28h2v2h-2zM15 30h2v2h-2zM23 22h2v2h-2zM25 24h2v2h-2z" fill="#000"/></g>
 <path d="M9 26.500L11 25M13 27L14.500 25.500" stroke="#00f" stroke-width="1.500"/>
</svg>
<!-- Mailer -->
<svg style="left:26px;top:148px" width="30" height="23" viewBox="0 0 30 23" shape-rendering="crispEdges">
 <rect x="4" y="0" width="23" height="2" fill="#e6e6e6"/><rect x="15" y="1" width="12" height="1" fill="#777"/>
 <rect x="3" y="2" width="25" height="2" fill="#d8d8d8"/><rect x="13" y="3" width="15" height="1" fill="#777"/>
 <rect x="0" y="7" width="2" height="15" fill="#f4f4f4"/><rect x="28" y="7" width="2" height="15" fill="#777"/>
 <rect x="2" y="4" width="27" height="10" fill="#E2E2E2"/><rect x="2" y="4" width="27" height="1" fill="#fff"/><rect x="28" y="5" width="1" height="9" fill="#aaa"/>
 <path d="M3 5h2v1h-2zM6 5h2v1h-2zM3 7h3v1h-3zM7 7h1v1h-1z" fill="#777"/>
 <path d="M18 5h2v1h-2zM18 7h2v1h-2zM21 6h1v1h-1zM22 5h1v1h-1zM22 7h1v1h-1z" fill="#f00"/>
 <path d="M25 5h1v1h-1zM26 6h1v1h-1zM25 7h1v1h-1z" fill="#0f0"/>
 <rect x="0" y="14" width="30" height="8" fill="#9c9c9c"/><rect x="0" y="14" width="9" height="8" fill="#d0d0d0"/><rect x="0" y="14" width="2" height="8" fill="#fff"/>
 <rect x="2" y="13" width="6" height="1" fill="#bbb"/><rect x="10" y="13" width="5" height="1" fill="#888"/><rect x="16" y="13" width="5" height="1" fill="#888"/>
 <rect x="9" y="14" width="13" height="5" fill="#e8e8e8"/><rect x="8" y="14" width="1" height="5" fill="#555"/>
 <path d="M10 15h3v1h-3zM14 15h3v1h-3zM18 15h3v1h-3z" fill="#888"/><rect x="9" y="18" width="13" height="1" fill="#fff"/>
 <rect x="28" y="14" width="2" height="8" fill="#555"/><rect x="1" y="21" width="28" height="1" fill="#666"/>
</svg>
<!-- Man Page Viewer -->
<svg style="left:212px;top:140px" width="24" height="30" viewBox="0 0 24 30" shape-rendering="crispEdges">
 <rect x="0" y="0" width="24" height="30" fill="#000"/><rect x="0" y="0" width="23" height="29" fill="#C0C0C0"/>
 <rect x="1" y="1" width="22" height="3" fill="#7a7a7a"/><path d="M2 2h2v1h-2zM5 2h3v1h-3zM9 2h2v1h-2z" fill="#fff"/>
 <rect x="1" y="4" width="22" height="1" fill="#000"/><rect x="1" y="4" width="1" height="24" fill="#000"/>
 <rect x="2" y="5" width="20" height="5" fill="#404040"/><path d="M5 7h2v1h-2zM8 7h2v1h-2zM11 7h1v1h-1z" fill="#fff"/>
 <rect x="12" y="11" width="3" height="2" fill="#00f"/><path d="M16 11h1v1h-1zM17 12h1v1h-1zM18 11h1v1h-1zM19 12h1v1h-1zM20 11h1v1h-1z" fill="#000"/>
 <rect x="5" y="14" width="7" height="1" fill="#ff0"/>
 <path d="M5 16h1v1h-1zM6 17h1v1h-1zM7 16h1v1h-1zM8 17h1v1h-1zM9 16h1v1h-1zM5 19h1v1h-1zM7 19h1v1h-1zM9 19h2v1h-2z" fill="#000"/>
 <rect x="2" y="21" width="2" height="2" fill="#f00"/>
 <path d="M5 21h1v2h-1zM7 21h1v2h-1zM9 21h1v1h-1zM10 22h1v1h-1zM12 22h1v1h-1zM13 21h1v1h-1zM15 21h1v1h-1zM16 22h2v1h-2zM18 21h1v1h-1z" fill="#000"/>
 <path d="M6 24h1v1h-1zM8 24h4v1h-4zM13 24h1v1h-1zM15 24h2v1h-2zM18 24h2v1h-2z" fill="#555"/>
 <rect x="12" y="26" width="9" height="1" fill="#00f"/>
 <rect x="22" y="5" width="1" height="24" fill="#aaa"/>
</svg>
<!-- Print Manager -->
<svg style="left:390px;top:140px" width="32" height="31" viewBox="0 0 32 31" shape-rendering="crispEdges">
 <path d="M4 9L7 6H29L31 8V17H4Z" fill="#D4D4D4" shape-rendering="auto"/><rect x="6" y="6" width="22" height="2" fill="#777"/>
 <rect x="10" y="0" width="12" height="8" fill="#fff"/><path d="M11 2h2v1h-2zM18 2h3v1h-3zM11 4h5v1h-5zM17 4h4v1h-4zM11 6h3v1h-3zM16 6h3v1h-3zM20 6h1v1h-1z" fill="#999"/>
 <rect x="7" y="8" width="15" height="1" fill="#555"/>
 <rect x="30" y="8" width="1" height="9" fill="#333"/><rect x="14" y="17" width="17" height="2" fill="#222"/>
 <rect x="23" y="10" width="7" height="4" fill="#999"/><rect x="24" y="11" width="5" height="2" fill="#0e0"/>
 <rect x="15" y="12" width="8" height="1" fill="#666"/>
 <path d="M1 17L5 13H22L26 17V26H1Z" fill="#E6E6E6" shape-rendering="auto"/>
 <rect x="4" y="14" width="18" height="3" fill="#666"/>
 <rect x="5" y="10" width="12" height="7" fill="#fff"/><path d="M6 11h2v1h-2zM13 11h3v1h-3zM6 13h5v1h-5zM12 13h4v1h-4zM6 15h3v1h-3zM11 15h3v1h-3zM15 15h1v1h-1z" fill="#999"/>
 <rect x="1" y="17" width="25" height="1" fill="#fff"/>
 <rect x="2" y="19" width="15" height="1" fill="#bbb"/><rect x="3" y="21" width="20" height="1" fill="#555"/>
 <rect x="18" y="19" width="7" height="4" fill="#999"/><rect x="19" y="20" width="5" height="2" fill="#0e0"/>
 <rect x="0" y="17" width="1" height="10" fill="#000"/><rect x="25" y="17" width="1" height="9" fill="#555"/>
 <rect x="1" y="25" width="25" height="3" fill="#111"/><rect x="3" y="24" width="16" height="1" fill="#111"/>
 <rect x="3" y="25" width="16" height="5" fill="#7d7d7d"/><rect x="4" y="25" width="14" height="1" fill="#bbb"/><rect x="3" y="29" width="16" height="1" fill="#222"/>
</svg>
<!-- Style Manager -->
<svg style="left:26px;top:203px" width="32" height="28" viewBox="0 0 32 28">
 <g shape-rendering="crispEdges">
 <rect x="3" y="0" width="25" height="19" fill="#8c8c8c"/><rect x="3" y="0" width="25" height="1" fill="#666"/><rect x="3" y="0" width="1" height="12" fill="#666"/>
 <rect x="4" y="1" width="23" height="1" fill="#f4f4f4"/><rect x="4" y="1" width="1" height="9" fill="#f4f4f4"/>
 <rect x="5" y="2" width="22" height="9" fill="#CFCFCF"/>
 <rect x="6" y="3" width="10" height="7" fill="#777"/><rect x="7" y="4" width="8" height="5" fill="#C8C8C8"/><rect x="9" y="6" width="4" height="1" fill="#555"/>
 <rect x="0" y="6" width="6" height="1" fill="#fff"/><rect x="5" y="7" width="1" height="3" fill="#fff"/>
 <rect x="11" y="11" width="17" height="7" fill="#9a9a9a"/><rect x="11" y="18" width="17" height="1" fill="#e8e8e8"/>
 <rect x="0" y="11" width="11" height="17" fill="#B4B4B4"/><rect x="0" y="11" width="1" height="16" fill="#fff"/><rect x="1" y="10" width="9" height="1" fill="#e0e0e0"/>
 <rect x="10" y="12" width="1" height="15" fill="#555"/><rect x="1" y="26" width="10" height="2" fill="#666"/>
 <rect x="3" y="11" width="1" height="6" fill="#fff"/><rect x="6" y="11" width="1" height="6" fill="#fff"/><rect x="4" y="11" width="1" height="6" fill="#888"/><rect x="7" y="11" width="1" height="6" fill="#888"/>
 <rect x="1" y="17" width="9" height="1" fill="#777"/>
 <path d="M2 19h1v1h-1zM4 19h1v1h-1zM6 19h1v1h-1zM8 19h1v1h-1zM3 21h1v1h-1zM5 21h1v1h-1zM7 21h1v1h-1zM2 23h1v1h-1zM4 23h1v1h-1zM6 23h1v1h-1zM8 23h1v1h-1z" fill="#ddd"/>
 </g>
 <path d="M17 8.500C17 4.500 22 2 26 2C30 2 32 3.500 31.500 5.500C31 7 29 7.500 29.500 9C30 10.500 31 10 30.500 11.500C30 13 25 13.500 22 13C19 12.500 17 11 17 8.500Z" fill="#f2f2f2" stroke="#555" stroke-width=".8"/>
 <rect x="20" y="4" width="3" height="3" fill="#ff0"/><rect x="21" y="6" width="2" height="1" fill="#f00"/>
 <path d="M25 3h3v2h-3z" fill="#f0f"/><path d="M17.500 6.500l1.500 -1.500l1.500 1.500l-1.500 1.500z" fill="#f00"/>
 <path d="M20 9h4v2h-4zM21 8h2v1h-2z" fill="#00f"/><path d="M24 11h2v-1h2v-1h1v2h-2v1h-3z" fill="#0c0"/><rect x="24" y="11" width="2" height="1" fill="#00f"/>
 <rect x="25" y="7" width="2" height="2" fill="#555"/>
 <g style="font-family:'Liberation Serif',serif;font-weight:bold">
 <text x="15.500" y="25" font-size="13" fill="#000">T</text><text x="14.800" y="24.300" font-size="13" fill="#fff">T</text>
 <text x="21.500" y="26.500" font-size="11" fill="#000">T</text><text x="20.800" y="25.800" font-size="11" fill="#fff">T</text>
 <text x="26.200" y="28" font-size="9" fill="#000">T</text><text x="25.500" y="27.300" font-size="9" fill="#fff">T</text>
 </g>
</svg>
<!-- Terminal -->
<svg style="left:209px;top:203px" width="31" height="26" viewBox="0 0 31 26" shape-rendering="crispEdges">
 <rect x="5" y="1" width="21" height="17" fill="#000"/><rect x="4" y="0" width="21" height="17" fill="#fff"/>
 <rect x="5" y="3" width="19" height="1" fill="#aaa"/><rect x="24" y="3" width="1" height="14" fill="#bbb"/>
 <rect x="7" y="4" width="16" height="11" fill="#000"/><rect x="8" y="5" width="14" height="9" fill="#404040"/>
 <path d="M9 6h1v1h-1zM11 6h1v1h-1zM13 6h1v1h-1zM15 6h1v1h-1zM9 8h2v1h-2zM12 8h1v1h-1zM14 8h2v1h-2zM17 8h1v1h-1zM9 10h3v1h-3zM13 10h1v1h-1zM15 10h2v1h-2z" fill="#eee"/>
 <rect x="8" y="18" width="14" height="2" fill="#808080"/><rect x="8" y="18" width="2" height="2" fill="#111"/><rect x="20" y="18" width="2" height="2" fill="#111"/>
 <path d="M3 20H28L31 25H0Z" fill="#fff" shape-rendering="auto"/><path d="M28 20L31 25V26H1V25H30" fill="#000" shape-rendering="auto"/>
 <rect x="3" y="20" width="25" height="1" fill="#999"/>
 <path d="M5 21h1v1h-1zM7 21h1v1h-1zM9 21h1v1h-1zM11 21h1v1h-1zM13 21h1v1h-1zM15 21h1v1h-1zM17 21h1v1h-1zM19 21h1v1h-1zM21 21h1v1h-1zM24 21h1v1h-1zM26 21h1v1h-1zM4 22h1v1h-1zM6 22h1v1h-1zM8 22h1v1h-1zM10 22h1v1h-1zM12 22h1v1h-1zM14 22h1v1h-1zM16 22h1v1h-1zM18 22h1v1h-1zM20 22h1v1h-1zM23 22h1v1h-1zM25 22h1v1h-1z" fill="#666"/>
 <rect x="0" y="25" width="30" height="1" fill="#111"/>
</svg>
<!-- Text Editor -->
<svg style="left:392px;top:200px" width="30" height="30" viewBox="0 0 30 30">
 <g shape-rendering="crispEdges"><rect x="0" y="0" width="22" height="28" fill="#000"/><rect x="0" y="0" width="21" height="27" fill="#fff"/><rect x="1" y="1" width="20" height="26" fill="#DEDEDE"/>
 <path d="M3 4h1v1h-1zM5 4h2v1h-2zM8 4h1v1h-1zM10 4h2v1h-2zM3 7h3v1h-3zM7 7h1v1h-1zM9 7h1v1h-1zM11 7h2v1h-2zM14 7h1v1h-1zM15 7h2v1h-2zM3 10h1v1h-1zM5 10h2v1h-2zM8 10h2v1h-2z" fill="#000"/></g>
 <path d="M10 10L13.500 11.200L28 25.500L25.500 28L11.200 13.500Z" fill="#444"/>
 <path d="M12.500 12L27 26.200" stroke="#ff0" stroke-width="1.600"/><path d="M13.800 11.300L28 25.300" stroke="#99a" stroke-width="1"/>
 <path d="M10 10L12.800 11L11 12.800Z" fill="#000"/><path d="M11.500 12L13 11.200L14 13L12.500 13.800Z" fill="#fff"/>
 <circle cx="26.800" cy="26.800" r="2" fill="#ccc" stroke="#555" stroke-width=".7"/>
</svg>
</div>
<div class="w cG" id="mainwin">
 <div class="fr" style="left:13px;top:328px;width:410px;height:353px"></div>
 <div class="nd" style="left:37px;top:330px;width:1px;height:2px"></div><div class="nl" style="left:38px;top:330px;width:1px;height:2px"></div>
 <div class="nd" style="left:397px;top:330px;width:1px;height:2px"></div><div class="nl" style="left:398px;top:330px;width:1px;height:2px"></div>
 <div class="nd" style="left:37px;top:677px;width:1px;height:2px"></div><div class="nl" style="left:38px;top:677px;width:1px;height:2px"></div>
 <div class="nd" style="left:397px;top:677px;width:1px;height:2px"></div><div class="nl" style="left:398px;top:677px;width:1px;height:2px"></div>
 <div class="nd" style="left:15px;top:352px;width:2px;height:1px"></div><div class="nl" style="left:15px;top:353px;width:2px;height:1px"></div>
 <div class="nd" style="left:419px;top:352px;width:2px;height:1px"></div><div class="nl" style="left:419px;top:353px;width:2px;height:1px"></div>
 <div class="nd" style="left:15px;top:655px;width:2px;height:1px"></div><div class="nl" style="left:15px;top:656px;width:2px;height:1px"></div>
 <div class="nd" style="left:419px;top:655px;width:2px;height:1px"></div><div class="nl" style="left:419px;top:656px;width:2px;height:1px"></div>
 <div class="fi" style="left:17px;top:332px;width:402px;height:345px"></div>
 <div class="ra" style="left:18px;top:333px;width:20px;height:20px"><div class="ra" style="left:3px;top:7px;width:12px;height:4px"></div></div>
 <div class="ra tt" style="left:38px;top:333px;width:340px;height:20px;letter-spacing:.5px">Main Window</div>
 <div class="ra" style="left:378px;top:333px;width:20px;height:20px"><div class="ra" style="left:7px;top:7px;width:4px;height:4px"></div></div>
 <div class="ra" style="left:398px;top:333px;width:20px;height:20px"><div class="ra" style="left:3px;top:3px;width:12px;height:12px"></div></div>
 <!-- client -->
 <div class="cP">
  <div style="left:18px;top:353px;width:400px;height:323px;background:#fff"></div>
  <div class="f" style="left:18px;top:353px;width:400px;height:26px"></div>
  <div class="ra" style="left:19px;top:354px;width:51px;height:22px"><span class="t" style="left:2px;top:1px;letter-spacing:.95px">Button</span></div>
  <div class="su cD" style="left:19px;top:380px;width:398px;height:98px"></div>
  <div class="f" style="left:18px;top:476px;width:398px;height:36px"></div>
  <span class="t" style="left:21px;top:484px;letter-spacing:.5px">ComboBox:</span>
  <div class="ra b2" style="left:102px;top:481px;width:72px;height:24px"><span class="t" style="left:7px;top:1px;letter-spacing:.6px">itemA</span>
   <div class="nd" style="left:52px;top:0;width:1px;height:20px"></div><div class="nl" style="left:53px;top:0;width:1px;height:20px"></div>
   <svg style="left:55px;top:5px" width="12" height="11" viewBox="0 0 12 11"><path d="M.5 .5H11.500" stroke="#6C615B" fill="none"/><path d="M.5 .5L6 10.500" stroke="#6C615B" fill="none"/><path d="M11.500 .5L6 10.500" stroke="#E7DEDA" fill="none"/></svg>
  </div>
  <span class="t" style="left:179px;top:481px;letter-spacing:.5px">ComboBox:</span>
  <div class="ra b2" style="left:260px;top:478px;width:72px;height:24px"><span class="t" style="left:7px;top:1px;letter-spacing:.6px">itemA</span>
   <div class="nd" style="left:52px;top:0;width:1px;height:20px"></div><div class="nl" style="left:53px;top:0;width:1px;height:20px"></div>
   <svg style="left:55px;top:5px" width="12" height="11" viewBox="0 0 12 11"><path d="M.5 .5H11.500" stroke="#6C615B" fill="none"/><path d="M.5 .5L6 10.500" stroke="#6C615B" fill="none"/><path d="M11.500 .5L6 10.500" stroke="#E7DEDA" fill="none"/></svg>
  </div>
  <div class="f" style="left:18px;top:656px;width:400px;height:20px"></div>
  <span class="t" style="left:19px;top:657px;letter-spacing:1.35px">module</span>
 </div>
</div>
<div class="w cO" id="builder">
 <div class="fr" style="left:433px;top:229px;width:571px;height:411px"></div>
 <div class="fi" style="left:437px;top:233px;width:563px;height:403px"></div>
 <div class="ra" style="left:438px;top:234px;width:20px;height:20px"><div class="ra" style="left:3px;top:7px;width:12px;height:4px"></div></div>
 <div class="ra tt" style="left:458px;top:234px;width:501px;height:20px;letter-spacing:.55px">Application Builder - project.bip (Save Needed)</div>
 <div class="ra" style="left:959px;top:234px;width:20px;height:20px"><div class="ra" style="left:7px;top:7px;width:4px;height:4px"></div></div>
 <div class="ra" style="left:979px;top:234px;width:20px;height:20px"><div class="ra" style="left:3px;top:3px;width:12px;height:12px"></div></div>
 <!-- client 438..998 x 254..634 -->
 <div class="f cP" style="left:438px;top:254px;width:561px;height:381px"></div>
 <div class="ra cT mb" style="left:438px;top:254px;width:561px;height:30px">
  <span class="t" style="left:10px;top:5px"><u>F</u>ile</span>
  <span class="t" style="left:48px;top:5px;letter-spacing:.3px"><u>E</u>dit</span>
  <span class="t" style="left:87px;top:5px"><u>V</u>iew</span>
  <span class="t" style="left:133px;top:5px;letter-spacing:.8px"><u>L</u>ayout</span>
  <span class="t" style="left:194px;top:5px;letter-spacing:.4px">E<u>d</u>itors</span>
  <span class="t" style="left:518px;top:5px;letter-spacing:.5px"><u>H</u>elp</span>
 </div>
 <div class="cP">
  <!-- mode row -->
  <div style="left:620px;top:295px;width:81px;height:26px;border:1px solid #EDA870"></div>
  <div class="rd on" style="left:623px;top:300px"></div><span class="t" style="left:643px;top:299px;letter-spacing:.9px">Build</span>
  <div class="rd" style="left:704px;top:300px"></div><span class="t" style="left:725px;top:299px;letter-spacing:.65px">Test Shown Modules</span>
  <div class="rd" style="left:883px;top:300px"></div><span class="t" style="left:903px;top:299px;letter-spacing:.75px">Test Project</span>
  <!-- palette frames -->
  <div class="et" style="left:438px;top:326px;width:82px;height:254px"></div>
  <div class="et" style="left:518px;top:326px;width:86px;height:254px"></div>
  <div class="et" style="left:602px;top:326px;width:397px;height:254px"></div>
  <span class="t sb" style="left:450px;top:329px">Windows</span>
  <span class="t sb" style="left:540px;top:329px">Panes</span>
  <span class="t sb" style="left:779px;top:329px">Controls</span>
  <div class="su" style="left:452px;top:356px;width:54px;height:38px"></div>
  <div class="su" style="left:452px;top:411px;width:54px;height:38px"></div>
  <div class="su" style="left:452px;top:466px;width:54px;height:38px"></div>
  <div class="su" style="left:534px;top:356px;width:54px;height:38px"></div>
  <div class="nl" style="left:528px;top:402px;width:67px;height:1px"></div><div class="nd" style="left:528px;top:403px;width:67px;height:1px"></div>
  <div class="su" style="left:534px;top:412px;width:54px;height:38px"></div>
  <div class="su" style="left:534px;top:467px;width:54px;height:38px"></div>
  <div class="su" style="left:534px;top:522px;width:54px;height:38px"></div>
  <!-- controls -->
  <div class="ra" style="left:621px;top:361px;width:46px;height:20px"><span class="t sb" style="left:2px;top:0px;letter-spacing:.4px">Button</span></div>
  <div class="ra b2" style="left:622px;top:399px;width:113px;height:25px"><span class="t sb" style="left:6px;top:1px;word-spacing:2px">Menu Button</span>
   <svg style="left:90px;top:7px" width="10" height="9" viewBox="0 0 10 9"><path d="M0 0H9.500L5 8.500Z" fill="#C6B2A8"/><path d="M0 .5H9.500M.5 .5L5 8.500" stroke="#E7DEDA" fill="none"/><path d="M9 1L5 8.500" stroke="#6C615B" stroke-width="1.500" fill="none"/></svg></div>
  <div class="ra b2" style="left:622px;top:443px;width:96px;height:22px"><span class="t sb" style="left:7px;top:0px;letter-spacing:-.05px">ComboBox</span>
   <div class="nd" style="left:76px;top:0;width:1px;height:18px"></div><div class="nl" style="left:77px;top:0;width:1px;height:18px"></div>
   <svg style="left:79px;top:4px" width="12" height="11" viewBox="0 0 12 11"><path d="M.5 .5H11.500" stroke="#6C615B" fill="none"/><path d="M.5 .5L6 10.500" stroke="#6C615B" fill="none"/><path d="M11.500 .5L6 10.500" stroke="#E7DEDA" fill="none" stroke-dasharray="1.500 1"/></svg></div>
  <div class="ra cT" style="left:622px;top:486px;width:74px;height:22px;color:#fff"><span class="t sb" style="left:2px;top:1px;letter-spacing:.3px">OptionA</span><div class="ra" style="left:54px;top:7px;width:11px;height:6px"></div></div>
  <div class="ra" style="left:621px;top:528px;width:232px;height:19px"><span class="t sb" style="left:16px;top:0">File</span><span class="t sb" style="left:60px;top:0;letter-spacing:.3px">Edit</span><span class="t sb" style="left:187px;top:0">Help</span></div>
  <div class="rd on" style="left:773px;top:366px;width:15px;height:15px"></div><span class="t sb" style="left:791px;top:364px">A</span>
  <div class="rd" style="left:805px;top:366px;width:15px;height:15px"></div><span class="t sb" style="left:823px;top:364px">B</span>
  <div class="su sel" style="left:766px;top:408px;width:11px;height:11px"></div>
  <svg style="left:766px;top:407px" width="12" height="12" viewBox="0 0 12 12"><path d="M1.500 6L4.500 8L5.500 10L10.500 2" stroke="#000" stroke-width="2" fill="none"/></svg>
  <span class="t sb" style="left:783px;top:405px;letter-spacing:0">Checkbox</span>
  <div class="su" style="left:758px;top:442px;width:88px;height:15px"><div class="sel" style="left:0;top:0;width:43px;height:13px"></div></div>
  <div class="su sel" style="left:758px;top:471px;width:88px;height:15px"><div class="ra" style="left:28px;top:0;width:31px;height:13px"><div class="nd" style="left:13px;top:0;width:1px;height:11px"></div><div class="nl" style="left:14px;top:0;width:1px;height:11px"></div></div></div>
  <div class="nd" style="left:755px;top:503px;width:94px;height:1px"></div><div class="nl" style="left:755px;top:504px;width:94px;height:1px"></div>
  <span class="t sb" style="left:870px;top:359px;letter-spacing:1px">Text:</span>
  <div class="su cD" style="left:904px;top:355px;width:64px;height:26px;color:#fff"><span class="t sb" style="left:6px;top:3px;letter-spacing:.3px">abc</span><div style="left:4px;top:6px;width:1px;height:13px;border-left:1px dotted #fff"></div></div>
  <span class="t sb" style="left:903px;top:397px">Label</span>
  <div class="su cD" style="left:889px;top:430px;width:41px;height:68px;color:#fff"><span class="t sb" style="left:1px;top:0;letter-spacing:.55px">itemA</span><span class="t sb" style="left:1px;top:16px;letter-spacing:.55px">itemB</span></div>
  <div class="su sel" style="left:934px;top:430px;width:13px;height:68px"></div>
  <div class="ra" style="left:935px;top:442px;width:11px;height:43px"></div>
  <svg style="left:935px;top:431px" width="11" height="10" viewBox="0 0 11 10"><path d="M5.500 0L11 10H0Z" fill="#C6B2A8"/><path d="M5.500 0L0 10" stroke="#E7DEDA" fill="none"/><path d="M5.500 0L11 10M0 9.500H11" stroke="#6C615B" fill="none"/></svg>
  <svg style="left:935px;top:487px" width="11" height="10" viewBox="0 0 11 10"><path d="M0 0H11L5.500 10Z" fill="#C6B2A8"/><path d="M0 .5H11M0 0L5.500 10" stroke="#E7DEDA" fill="none"/><path d="M11 0L5.500 10" stroke="#6C615B" fill="none"/></svg>
  <div class="ra" style="left:871px;top:515px;width:94px;height:28px"></div>
  <div class="su" style="left:873px;top:519px;width:77px;height:20px;border-color:#333640 #BABDC6 #BABDC6 #333640"><span class="t sb" style="left:5px;top:0">0</span><div style="left:3px;top:3px;width:1px;height:13px;border-left:1px dotted #000"></div></div>
  <svg style="left:952px;top:517px" width="12" height="24" viewBox="0 0 12 24"><path d="M6 0L11.500 10.500H.5Z" fill="#000"/><path d="M6 24L11.500 13.500H.5Z" fill="#000"/></svg>
  <!-- bottom labels -->
  
  <span class="t sb" style="left:460px;top:583px;letter-spacing:.6px">Object Type:</span>
  <span class="t sb" style="left:456px;top:605px;letter-spacing:.4px">Object Name:</span>
  <span class="t sb" style="left:666px;top:583px;letter-spacing:.2px">Position:</span>
  <span class="t sb" style="left:688px;top:605px;letter-spacing:.4px">Size:</span>
  <span class="t sb" style="left:792px;top:583px;letter-spacing:.1px">Cursor Position:</span>
  <span class="t sb" style="left:796px;top:605px;letter-spacing:0">Editing Module: module</span>
 </div>
</div>
<div class="w" id="palicons">
<!-- win1: main window -->
<svg style="left:455px;top:359px" width="48" height="32" viewBox="0 0 48 32" shape-rendering="crispEdges">
 <rect x="0" y="0" width="48" height="32" fill="#111"/><rect x="0" y="0" width="47" height="31" fill="#A6A6A6"/>
 <rect x="0" y="0" width="47" height="3" fill="#9a9a9a"/><rect x="1" y="2" width="5" height="1" fill="#eee"/><rect x="8" y="2" width="2" height="1" fill="#eee"/><rect x="11" y="2" width="1" height="1" fill="#eee"/>
 <rect x="41" y="0" width="1" height="3" fill="#222"/><rect x="43" y="0" width="1" height="3" fill="#eee"/><rect x="45" y="0" width="1" height="3" fill="#222"/>
 <rect x="0" y="3" width="47" height="1" fill="#111"/><rect x="2" y="4" width="1" height="27" fill="#111"/>
 <rect x="3" y="4" width="44" height="27" fill="#888"/><rect x="4" y="5" width="42" height="25" fill="#B4B4B4"/><rect x="5" y="6" width="40" height="23" fill="#7e7e7e"/><rect x="6" y="7" width="38" height="21" fill="#BEBEBE"/>
</svg>
<!-- win2: dialog -->
<svg style="left:455px;top:414px" width="48" height="32" viewBox="0 0 48 32" shape-rendering="crispEdges">
 <rect x="0" y="0" width="48" height="32" fill="#111"/><rect x="0" y="0" width="47" height="31" fill="#C0C0C0"/>
 <rect x="2" y="2" width="44" height="28" fill="#111"/><rect x="3" y="3" width="42" height="27" fill="#939393"/><rect x="45" y="2" width="1" height="28" fill="#C0C0C0"/><rect x="2" y="30" width="44" height="1" fill="#aaa"/>
 <g fill="#ddd"><rect x="4" y="25" width="13" height="1"/><rect x="18" y="25" width="13" height="1"/><rect x="32" y="25" width="12" height="1"/><rect x="4" y="25" width="1" height="4"/><rect x="18" y="25" width="1" height="4"/><rect x="32" y="25" width="1" height="4"/></g>
 <g fill="#111"><rect x="5" y="28" width="12" height="1"/><rect x="19" y="28" width="12" height="1"/><rect x="33" y="28" width="11" height="1"/><rect x="16" y="26" width="1" height="3"/><rect x="30" y="26" width="1" height="3"/><rect x="43" y="26" width="1" height="3"/></g>
</svg>
<!-- win3: custom dialog -->
<svg style="left:455px;top:469px" width="48" height="32" viewBox="0 0 48 32" shape-rendering="crispEdges">
 <rect x="0" y="0" width="48" height="32" fill="#000"/><rect x="0" y="0" width="47" height="31" fill="#9a9a9a"/><rect x="0" y="0" width="47" height="1" fill="#c8c8c8"/><rect x="0" y="0" width="1" height="31" fill="#c8c8c8"/>
 <rect x="1" y="1" width="46" height="3" fill="#777"/><path d="M16 2h2v1h-2zM20 2h3v1h-3zM25 2h2v1h-2zM28 2h2v1h-2z" fill="#eee"/>
 <rect x="4" y="5" width="39" height="2" fill="#777"/><rect x="4" y="21" width="39" height="2" fill="#777"/>
 <rect x="4" y="8" width="16" height="12" fill="#000"/><rect x="5" y="9" width="15" height="11" fill="#ddd"/><rect x="5" y="9" width="14" height="10" fill="#777"/>
 <rect x="25" y="8" width="16" height="12" fill="#000"/><rect x="26" y="9" width="15" height="11" fill="#ddd"/><rect x="26" y="9" width="14" height="10" fill="#777"/>
 <rect x="21" y="8" width="2" height="2" fill="#666"/><rect x="21" y="11" width="2" height="6" fill="#bbb"/><rect x="21" y="18" width="2" height="2" fill="#666"/>
 <rect x="42" y="8" width="1" height="2" fill="#666"/><rect x="42" y="11" width="1" height="6" fill="#ccc"/><rect x="42" y="18" width="1" height="2" fill="#666"/>
 <rect x="0" y="24" width="47" height="1" fill="#c8c8c8"/>
 <g fill="#ddd"><rect x="1" y="26" width="13" height="1"/><rect x="17" y="26" width="13" height="1"/><rect x="33" y="26" width="13" height="1"/><rect x="1" y="26" width="1" height="4"/><rect x="17" y="26" width="1" height="4"/><rect x="33" y="26" width="1" height="4"/></g>
 <g fill="#000"><rect x="2" y="29" width="12" height="1"/><rect x="18" y="29" width="12" height="1"/><rect x="34" y="29" width="12" height="1"/><rect x="13" y="27" width="1" height="3"/><rect x="29" y="27" width="1" height="3"/><rect x="45" y="27" width="1" height="3"/></g>
</svg>
<!-- pane1: control pane -->
<svg style="left:537px;top:359px" width="48" height="32" viewBox="0 0 48 32">
 <g shape-rendering="crispEdges"><rect width="48" height="32" fill="#939393"/>
 <rect x="3" y="2" width="10" height="10" fill="#222"/><rect x="4" y="3" width="9" height="9" fill="#ccc"/><rect x="4" y="3" width="8" height="8" fill="#777"/>
 <rect x="33" y="7" width="13" height="1" fill="#222"/>
 <rect x="2" y="23" width="44" height="7" fill="#222"/><rect x="3" y="24" width="43" height="6" fill="#ccc"/><rect x="3" y="24" width="42" height="5" fill="#8a8a8a"/>
 <rect x="15" y="24" width="13" height="5" fill="#bdbdbd"/><rect x="21" y="24" width="1" height="5" fill="#666"/><rect x="22" y="24" width="1" height="5" fill="#e8e8e8"/><rect x="15" y="28" width="13" height="1" fill="#555"/></g>
 <path d="M3 6.500L7 10.500L15 2.500" stroke="#fff" stroke-width="2.400" fill="none"/>
 <text x="20" y="8" style="font-family:'Liberation Serif',serif" font-size="7" fill="#222">Text:</text>
</svg>
<!-- pane2: text pane -->
<svg style="left:537px;top:415px" width="49" height="32" viewBox="0 0 49 32" shape-rendering="crispEdges">
 <rect x="0" y="0" width="42" height="27" fill="#000"/><rect x="1" y="1" width="41" height="26" fill="#f0f0f0"/><rect x="1" y="1" width="40" height="25" fill="#ABABAB"/>
 <path d="M4 4h19v1h-19zM4 6h11v1h-11zM4 8h16v1h-16zM4 10h21v1h-21zM4 12h9v1h-9zM4 14h12v1h-12zM4 16h15v1h-15z" fill="#fff"/>
 <rect x="43" y="0" width="6" height="27" fill="#000"/><rect x="44" y="1" width="5" height="26" fill="#666"/><rect x="44" y="3" width="3" height="11" fill="#bbb"/><rect x="44" y="14" width="4" height="1" fill="#000"/><rect x="47" y="4" width="1" height="10" fill="#000"/>
 <rect x="0" y="27" width="42" height="5" fill="#000"/><rect x="1" y="28" width="41" height="4" fill="#666"/><rect x="11" y="28" width="20" height="2" fill="#c4c4c4"/><rect x="11" y="30" width="21" height="1" fill="#000"/>
 <rect x="43" y="27" width="6" height="5" fill="#999"/>
</svg>
<!-- pane3: draw area -->
<svg style="left:537px;top:470px" width="48" height="32" viewBox="0 0 48 32">
 <defs><pattern id="dbl" width="2" height="2" patternUnits="userSpaceOnUse"><rect width="2" height="2" fill="#22f"/><rect width="1" height="1" fill="#aac"/></pattern>
 <pattern id="drd" width="2" height="2" patternUnits="userSpaceOnUse"><rect width="2" height="2" fill="#f22"/><rect width="1" height="1" fill="#ecc"/></pattern></defs>
 <g shape-rendering="crispEdges"><rect width="48" height="32" fill="#000"/><rect width="47" height="31" fill="#D0D0D0"/>
 <rect x="2" y="2" width="41" height="25" fill="#000"/><rect x="3" y="3" width="40" height="24" fill="#eee"/><rect x="3" y="3" width="39" height="23" fill="#ABABAB"/>
 <rect x="13" y="4" width="13" height="21" fill="#000"/><rect x="14" y="5" width="11" height="19" fill="#ff0"/>
 <rect x="44" y="2" width="3" height="25" fill="#888"/><rect x="44" y="3" width="2" height="2" fill="#555"/><rect x="44" y="6" width="2" height="9" fill="#ddd"/><rect x="44" y="16" width="2" height="10" fill="#555"/>
 <rect x="2" y="28" width="45" height="2" fill="#888"/><rect x="3" y="28" width="10" height="2" fill="#555"/><rect x="14" y="28" width="19" height="2" fill="#ccc"/><rect x="34" y="28" width="9" height="2" fill="#555"/></g>
 <path d="M9.500 9.500H15.500L18.500 12.500V18.500L15.500 21.500H9.500L6.500 18.500V12.500Z" fill="url(#dbl)" stroke="#000" stroke-width="1"/>
 <path d="M30 10L40 20.500H20Z" fill="url(#drd)" stroke="#000" stroke-width="1"/>
</svg>
<!-- pane4: term pane -->
<svg style="left:537px;top:525px" width="48" height="32" viewBox="0 0 48 32">
 <rect width="48" height="32" fill="#ABABAB"/>
 <rect x="12.500" y="1.500" width="23" height="18" rx="2" fill="#fff" stroke="#000" stroke-width="1.200"/>
 <rect x="14" y="3" width="20" height="2" fill="#fff"/><rect x="14" y="17" width="20" height="2" fill="#bbb"/>
 <rect x="16" y="6" width="17" height="11" fill="#000" shape-rendering="crispEdges"/>
 <path d="M18 8.500h8M18 11.500h5M18 14.500h12" stroke="#fff" stroke-width="1" shape-rendering="crispEdges"/>
 <path d="M16 20h16v2h-16z" fill="#888"/><path d="M15 20l-2 2h22l-2-2" fill="none" stroke="#000" stroke-width=".8"/>
 <path d="M10 22.500H38L41.500 29.500H6.500Z" fill="#c4c4c4" stroke="#000" stroke-width="1.200"/>
 <path d="M7 30h34" stroke="#000" stroke-width="1.600"/>
 <path d="M11 27l3-3M14 27l3-3M17 27l3-3M20 27l3-3M23 27l3-3M27 24v3M30 24l3 3M33 24l-3 3" stroke="#999" stroke-width=".8"/>
</svg>
</div>
<div class="w cG" id="fpanel">
 <div class="fr" style="left:34px;top:683px;width:964px;height:85px"></div>
 <div style="left:38px;top:687px;width:956px;height:77px;border:1px solid;border-color:var(--ts) var(--bs) var(--bs) var(--ts)"></div>
 <div class="ra" style="left:39px;top:688px;width:20px;height:14px"><div class="ra" style="left:3px;top:4px;width:12px;height:4px"></div></div>
 <div class="ra" style="left:973px;top:688px;width:20px;height:14px"><div class="ra" style="left:7px;top:4px;width:4px;height:4px"></div></div>
 <div style="left:39px;top:702px;width:20px;height:61px;background:repeating-linear-gradient(to bottom,#D2D2D2 0,#D2D2D2 1px,#505050 1px,#505050 2px)"></div>
 <div style="left:973px;top:702px;width:20px;height:61px;background:repeating-linear-gradient(to bottom,#D2D2D2 0,#D2D2D2 1px,#505050 1px,#505050 2px)"></div>
 <div class="f" style="left:59px;top:688px;width:56px;height:15px;border-top:1px solid #D2D2D2;border-left:1px solid #D2D2D2;border-right:1px solid #505050"></div>
 <div class="f" style="left:115px;top:688px;width:58px;height:15px;border-top:1px solid #D2D2D2;border-left:1px solid #D2D2D2;border-right:1px solid #505050"></div>
 <div class="f" style="left:173px;top:688px;width:58px;height:15px;border-top:1px solid #D2D2D2;border-left:1px solid #D2D2D2;border-right:1px solid #505050"></div>
 <div class="f" style="left:231px;top:688px;width:58px;height:15px;border-top:1px solid #D2D2D2;border-left:1px solid #D2D2D2;border-right:1px solid #505050"></div>
 <div class="f" style="left:289px;top:688px;width:58px;height:15px;border-top:1px solid #D2D2D2;border-left:1px solid #D2D2D2;border-right:1px solid #505050"></div>
 <div class="f" style="left:347px;top:688px;width:7px;height:15px;border-top:1px solid #D2D2D2;border-left:1px solid #D2D2D2;border-right:1px solid #505050"></div>
 <div class="f" style="left:679px;top:688px;width:8px;height:15px;border-top:1px solid #D2D2D2;border-left:1px solid #D2D2D2;border-right:1px solid #505050"></div>
 <div class="f" style="left:687px;top:688px;width:58px;height:15px;border-top:1px solid #D2D2D2;border-left:1px solid #D2D2D2;border-right:1px solid #505050"></div>
 <div class="f" style="left:745px;top:688px;width:57px;height:15px;border-top:1px solid #D2D2D2;border-left:1px solid #D2D2D2;border-right:1px solid #505050"></div>
 <div class="f" style="left:802px;top:688px;width:57px;height:15px;border-top:1px solid #D2D2D2;border-left:1px solid #D2D2D2;border-right:1px solid #505050"></div>
 <div class="f" style="left:859px;top:688px;width:57px;height:15px;border-top:1px solid #D2D2D2;border-left:1px solid #D2D2D2;border-right:1px solid #505050"></div>
 <div class="f" style="left:916px;top:688px;width:57px;height:15px;border-top:1px solid #D2D2D2;border-left:1px solid #D2D2D2;border-right:1px solid #505050"></div>
 <svg style="left:254px;top:691px" width="14" height="8" viewBox="0 0 14 8"><path d="M7 .5L13.500 7.500H.5Z" fill="#999"/><path d="M7 .5L.5 7.500" stroke="#D2D2D2" fill="none"/><path d="M7 .5L13.500 7.500H.5" stroke="#505050" fill="none"/></svg>
 <svg style="left:710px;top:691px" width="14" height="8" viewBox="0 0 14 8"><path d="M7 .5L13.500 7.500H.5Z" fill="#999"/><path d="M7 .5L.5 7.500" stroke="#D2D2D2" fill="none"/><path d="M7 .5L13.500 7.500H.5" stroke="#505050" fill="none"/></svg>
 <svg style="left:880px;top:691px" width="14" height="8" viewBox="0 0 14 8"><path d="M7 .5L13.500 7.500H.5Z" fill="#999"/><path d="M7 .5L.5 7.500" stroke="#D2D2D2" fill="none"/><path d="M7 .5L13.500 7.500H.5" stroke="#505050" fill="none"/></svg>
 <div class="f cP" style="left:59px;top:703px;width:295px;height:60px;border:1px solid;border-color:#A7CFDA #244853 #244853 #A7CFDA;border-right:none"></div>
 <div class="f cP" style="left:354px;top:688px;width:325px;height:75px;border:1px solid;border-color:#A7CFDA #244853 #244853 #A7CFDA"></div>
 <div class="f cP" style="left:679px;top:703px;width:294px;height:60px;border:1px solid;border-color:#A7CFDA #244853 #244853 #A7CFDA;border-left-color:#A7CFDA"></div>
 <div class="cP" style="left:392px;top:694px;width:122px;height:28px;border:1px solid;border-color:#6C615B #E7DEDA #E7DEDA #6C615B"></div>
 <div class="c1 f" style="left:393px;top:695px;width:120px;height:26px;border:2px solid;border-color:var(--ts) var(--bs) var(--bs) var(--ts);color:#fff;text-shadow:1px 1px 0 #333"><span class="t" style="left:4px;top:2px;letter-spacing:1.1px">One</span></div>
 <div class="cP" style="left:520px;top:694px;width:122px;height:28px;border:1px solid;border-color:#6C615B #E7DEDA #E7DEDA #6C615B"></div>
 <div class="cP f" style="left:521px;top:695px;width:120px;height:26px;border:2px solid;border-color:var(--ts) var(--bs) var(--bs) var(--ts);color:#fff;text-shadow:1px 1px 0 #333"><span class="t" style="left:4px;top:2px;letter-spacing:1.1px">Two</span></div>
 <div class="cP" style="left:392px;top:728px;width:122px;height:28px;border:1px solid;border-color:#6C615B #E7DEDA #E7DEDA #6C615B"></div>
 <div class="cT f" style="left:393px;top:729px;width:120px;height:26px;border:2px solid;border-color:var(--bs) var(--ts) var(--ts) var(--bs);color:#fff;text-shadow:1px 1px 0 #333"><span class="t" style="left:4px;top:2px;letter-spacing:1.1px">Three</span></div>
 <div class="cP" style="left:520px;top:728px;width:122px;height:28px;border:1px solid;border-color:#6C615B #E7DEDA #E7DEDA #6C615B"></div>
 <div class="c4 f" style="left:521px;top:729px;width:120px;height:26px;border:2px solid;border-color:var(--ts) var(--bs) var(--bs) var(--ts);color:#fff;text-shadow:1px 1px 0 #333"><span class="t" style="left:4px;top:2px;letter-spacing:1.1px">Four</span></div>
 <div class="su cP" style="left:648px;top:700px;width:24px;height:6px;background:#555"><div style="left:1px;top:1px;width:20px;height:2px;background:repeating-linear-gradient(to right,#ff0 0,#ff0 1px,#555 1px,#555 2px)"></div></div>
 <div style="left:650px;top:734px;width:24px;height:17px;background:#fff;border-left:1px solid #6C615B;border-top:1px solid #6C615B"><div style="left:1px;top:1px;width:21px;height:14px;background:#D0D0D0;border-right:1px solid #333;border-bottom:1px solid #333"></div>
 <svg style="left:0;top:0" width="24" height="17" viewBox="0 0 24 17"><text x="2" y="12.300" style="font-family:'Liberation Sans',sans-serif;font-size:15px" fill="#111" textLength="18.500" lengthAdjust="spacingAndGlyphs">EXIT</text></svg></div>
</div>
<div class="w" id="panelicons">
<!-- clock -->
<svg style="left:66px;top:712px" width="43" height="43" viewBox="0 0 43 43">
 <path d="M5.500 1.500H37.500L41.500 5.500V37.500L37.500 41.500H5.500L1.500 37.500V5.500Z" fill="none" stroke="#6C615B" stroke-width="1"/>
 <path d="M5.900 2.500H37.100L40.500 5.900V37.100L37.100 40.500H5.900L2.500 37.100V5.900Z" fill="none" stroke="#fff" stroke-width="1"/>
 <path d="M12 6H32L38 12V32L32 38H12L6 32V12Z" fill="#A8978F"/>
 <g fill="#fff" shape-rendering="crispEdges"><path d="M20 4h3v1h-3zM22 3v3h-1v-3z M37 21h3v1h-3zM39 20v3h-1v-3z M3 21h3v1h-3zM5 20v3h-1v-3z M20 38h3v1h-3zM22 37v3h-1v-3z"/><rect x="12" y="5" width="1" height="1"/><rect x="30" y="5" width="1" height="1"/><rect x="5" y="12" width="1" height="1"/><rect x="37" y="12" width="1" height="1"/><rect x="5" y="30" width="1" height="1"/><rect x="37" y="30" width="1" height="1"/><rect x="12" y="37" width="1" height="1"/><rect x="30" y="37" width="1" height="1"/></g>
 <path d="M23 20H12L11 19.800V23H23Z" fill="#9CC8D4"/><path d="M6 18.400L14 20.600" stroke="#9CC8D4" stroke-width="1.200"/>
</svg>
<!-- calendar -->
<svg style="left:125px;top:709px" width="37" height="46" viewBox="0 0 37 46">
 <g shape-rendering="crispEdges"><rect x="0" y="2" width="36" height="43" fill="#6C615B"/><rect x="1" y="3" width="35" height="42" fill="#333"/><rect x="1" y="3" width="33" height="40" fill="#E8E8E8"/><rect x="3" y="5" width="31" height="38" fill="#BEBEBE"/><rect x="2" y="42" width="33" height="1" fill="#777"/><rect x="34" y="4" width="1" height="39" fill="#777"/></g>
 <path d="M4 0h3v5l-1.500 2.500L4 5zM29 0h3v5l-1.500 2.500L29 5z" fill="#fff" stroke="#555" stroke-width=".6"/>
 <path d="M27 43L35 35V43Z" fill="#555"/><path d="M27 36H34L27 43Z" fill="#f4f4f4"/>
 <text x="5.500" y="19.500" style="font-family:'Liberation Mono',monospace;font-size:15px" fill="#000" textLength="24" lengthAdjust="spacingAndGlyphs">Feb</text>
 <text x="9.500" y="36" style="font-family:'Liberation Mono',monospace;font-size:15px" fill="#000" textLength="16" lengthAdjust="spacingAndGlyphs">21</text>
</svg>
<!-- file manager large -->
<svg style="left:180px;top:708px" width="44" height="48" viewBox="0 0 44 48">
 <g shape-rendering="crispEdges"><rect x="0" y="10" width="3" height="30" fill="#6C615B"/><rect x="0" y="10" width="14" height="4" fill="#6C615B"/></g>
 <path d="M8 14.500L26 1L36 16Z" fill="#BDBDBD"/><path d="M8 14L26.500 1" stroke="#fff" stroke-width="2" fill="none"/><path d="M27 1L36 16" stroke="#000" stroke-width="1.200" fill="none"/>
 <path d="M18.500 6.800L27 2.500" stroke="#00f" stroke-width="3" fill="none"/>
 <g shape-rendering="crispEdges">
 <rect x="2" y="16" width="37" height="28" fill="#000"/><rect x="2" y="16" width="36" height="27" fill="#ADADAD"/><rect x="2" y="16" width="1" height="27" fill="#fff"/><rect x="2" y="15" width="36" height="1" fill="#f0f0f0"/>
 <rect x="39" y="21" width="4" height="27" fill="#6C615B"/><rect x="7" y="44" width="36" height="4" fill="#6C615B"/>
 <rect x="13" y="20" width="15" height="9" fill="#fff"/><rect x="14" y="21" width="13" height="3" fill="#ffdc00"/><rect x="14" y="24" width="13" height="4" fill="#000"/>
 <path d="M14 21h1v1h-1zM16 21h1v1h-1zM18 21h1v1h-1zM20 21h1v1h-1zM22 21h1v1h-1zM24 21h1v1h-1zM26 21h1v1h-1zM15 22h1v1h-1zM17 22h1v1h-1zM19 22h1v1h-1zM21 22h1v1h-1zM23 22h1v1h-1zM25 22h1v1h-1zM14 23h1v1h-1zM16 23h1v1h-1zM18 23h1v1h-1zM20 23h1v1h-1zM22 23h1v1h-1zM24 23h1v1h-1zM26 23h1v1h-1z" fill="#f00"/>
 <rect x="14" y="29" width="15" height="1" fill="#6C615B"/></g>
 <path d="M4 14h7l-1 2h-7zM12 14h7l-1 2h-7zM20 14h7l-1 2h-7zM28 14h7l-1 2h-7z" fill="#f00"/>
 <path d="M12 14h7l-1 2h-7z" fill="#f0f"/><path d="M20 14h7l-1 2h-7z" fill="#0f0"/><path d="M28 14h7l-1 2h-7z" fill="#0ff"/>
</svg>
<!-- text editor large -->
<svg style="left:240px;top:711px" width="42" height="44" viewBox="0 0 42 44">
 <g shape-rendering="crispEdges"><rect x="0" y="0" width="30" height="39" fill="#6C615B"/><rect x="1" y="1" width="29" height="38" fill="#fff"/><rect x="2" y="2" width="27" height="36" fill="#000"/><rect x="2" y="2" width="26" height="35" fill="#DEDEDE"/>
 <path d="M4 7h1v1h-1zM6 6h1v2h-1zM8 7h2v1h-2zM11 6h1v2h-1zM13 7h2v1h-2zM17 6h1v2h-1zM19 7h2v1h-2zM4 11h3v1h-3zM8 10h1v2h-1zM11 11h1v1h-1zM13 10h1v2h-1zM15 11h2v1h-2zM19 11h3v1h-3zM4 15h1v1h-1zM6 14h2v2h-2zM9 15h2v1h-2zM12 14h1v2h-1zM14 15h2v1h-2z" fill="#000"/></g>
 <path d="M22 24L40 41" stroke="#6C615B" stroke-width="4" opacity=".5"/>
 <path d="M15.500 17.500L19.500 18.500L39.500 37.500L36.500 40.500L17 21.500Z" fill="#555"/>
 <path d="M19.500 19.500L37 36" stroke="#ff0" stroke-width="2"/><path d="M20.800 18.800L38.300 35.300" stroke="#aab" stroke-width="1"/><path d="M18 21.200L35.500 38" stroke="#888" stroke-width="1.200"/>
 <path d="M15.500 17.500L19.500 18.500L17 21.500Z" fill="#000"/>
 <path d="M36 36.500L39 39.500" stroke="#f0f" stroke-width="3"/><path d="M34.500 35L36 36.500" stroke="#ddd" stroke-width="3.500"/>
</svg>
<!-- mailer large -->
<svg style="left:293px;top:720px" width="48" height="33" viewBox="0 0 48 33">
 <g shape-rendering="crispEdges"><rect x="7" y="1" width="35" height="2" fill="#e4e4e4"/><rect x="24" y="2" width="18" height="1" fill="#777"/><rect x="6" y="3" width="37" height="2" fill="#d6d6d6"/><rect x="20" y="4" width="23" height="1" fill="#777"/>
 <rect x="5" y="5" width="38" height="18" fill="#E0E0E0"/><rect x="5" y="5" width="38" height="1" fill="#fff"/><rect x="42" y="6" width="1" height="12" fill="#bbb"/>
 <path d="M7 7h2v1h-2zM10 7h1v1h-1zM7 9h3v1h-3z" fill="#666"/>
 <path d="M31 7h1v1h-1zM33 7h1v1h-1zM35 7h1v1h-1zM32 8h1v1h-1zM34 8h1v1h-1zM31 9h1v1h-1zM33 10h1v1h-1zM35 9h1v1h-1z" fill="#f00"/>
 <path d="M37 7h1v1h-1zM39 7h1v1h-1zM38 8h1v2h-1zM37 10h1v1h-1zM39 10h1v1h-1zM37 8h1v2h-1z" fill="#0d0"/></g>
 <path d="M.5 18.500L4.500 13.500V18.500Z" fill="#ccc"/><path d="M47.500 18.500L43.500 13.500V18.500Z" fill="#555"/>
 <path d="M.5 18H13L15 24H33L35 18H47.500V31.500H.5Z" fill="#909090"/>
 <path d="M.5 18.500H13L15.500 24.500H32.500L35 18.500H47.500" stroke="#f4f4f4" stroke-width="1.200" fill="none"/>
 <path d="M15 26.500H33" stroke="#f4f4f4" stroke-width="1"/>
 <path d="M19 18.500h2M22 18.500h4M27 18.500h2M19 20.500h5M25 20.500h4" stroke="#666" stroke-width="1"/>
 <path d="M1 18V31.500" stroke="#fff" stroke-width="1.500"/><path d="M47 18.500V31.500" stroke="#555" stroke-width="1.200"/><path d="M1 31H47" stroke="#666" stroke-width="1.200"/><path d="M1 32.500H47" stroke="#f0f0f0" stroke-width="1"/>
</svg>
<!-- lock -->
<svg style="left:363px;top:696px" width="16" height="19" viewBox="0 0 16 19" shape-rendering="crispEdges">
 <path d="M2 8V3L5 0H11L13 2V8" fill="#D8D8D8" stroke="#6C615B" stroke-width="1" shape-rendering="auto"/>
 <rect x="5" y="2" width="7" height="6" fill="#000"/><rect x="6" y="3" width="4" height="5" fill="#C6B2A8"/><rect x="7" y="4" width="2" height="2" fill="#777"/>
 <rect x="0" y="8" width="15" height="11" fill="#6C615B"/><rect x="1" y="8" width="14" height="10" fill="#E4E4E4"/>
 <rect x="2" y="9" width="12" height="7" fill="#7d7d7d"/><rect x="2" y="10" width="12" height="1" fill="#aaa"/><rect x="2" y="12" width="12" height="1" fill="#aaa"/><rect x="2" y="14" width="12" height="1" fill="#aaa"/>
 <rect x="2" y="16" width="12" height="1" fill="#000"/>
</svg>
<!-- printer -->
<svg style="left:695px;top:723px" width="42" height="27" viewBox="0 0 42 27">
 <path d="M.5 8L5 3H36L41 8V19H.5Z" fill="#D6D6D6" stroke="#fff" stroke-width="1"/>
 <path d="M5 3.500H36L40.500 8" stroke="#555" stroke-width="1" fill="none"/>
 <rect x="1" y="8" width="39" height="1.500" fill="#fff"/><rect x="1" y="14" width="39" height="5" fill="#b4b4b4"/>
 <rect x="40" y="8" width="1.500" height="12" fill="#333"/>
 <rect x="6" y="6" width="24" height="1.500" fill="#666"/>
 <rect x="8" y="0" width="19" height="7" fill="#fff"/><path d="M10 2.500h4M15 2.500h5M21 2.500h4M10 4.500h14" stroke="#999" stroke-width="1"/>
 <path d="M4 11.500h3M9 11.500h3M14 11.500h3M19 11.500h3M24 11.500h3" stroke="#999" stroke-width="1"/><rect x="4" y="13" width="25" height="1" fill="#666"/>
 <rect x="30" y="10" width="9" height="3.500" fill="#777"/><rect x="31" y="11" width="3" height="1" fill="#ddd"/>
 <rect x="2" y="19" width="38" height="4" fill="#333"/><rect x="1" y="19" width="1.500" height="5" fill="#eee"/>
 <rect x="5" y="17.500" width="27" height="8.500" fill="#111"/><rect x="6" y="18.500" width="25" height="3" fill="#8a8a8a"/><rect x="6" y="22.500" width="25" height="2.500" fill="#666"/>
</svg>
<!-- style manager large -->
<svg style="left:749px;top:712px" width="48" height="40" viewBox="0 0 48 40">
 <g shape-rendering="crispEdges">
 <rect x="5" y="1" width="36" height="28" fill="#8c8c8c"/><rect x="5" y="1" width="36" height="1" fill="#555"/><rect x="5" y="1" width="1" height="18" fill="#555"/>
 <rect x="6" y="2" width="34" height="1" fill="#f4f4f4"/><rect x="6" y="2" width="1" height="14" fill="#f4f4f4"/>
 <rect x="7" y="3" width="33" height="13" fill="#CFCFCF"/>
 <rect x="9" y="5" width="13" height="10" fill="#777"/><rect x="10" y="6" width="11" height="8" fill="#C8C8C8"/><rect x="13" y="9" width="5" height="1" fill="#444"/>
 <rect x="23" y="5" width="1" height="10" fill="#777"/>
 <rect x="0" y="10" width="7" height="1" fill="#fff"/><rect x="6" y="11" width="2" height="1" fill="#fff"/><rect x="7" y="12" width="1" height="5" fill="#fff"/><rect x="8" y="12" width="1" height="5" fill="#555"/>
 <rect x="16" y="16" width="25" height="12" fill="#9a9a9a"/><rect x="16" y="28" width="25" height="1" fill="#e8e8e8"/>
 <rect x="0" y="17" width="16" height="23" fill="#B4B4B4"/><rect x="0" y="17" width="1" height="21" fill="#fff"/><rect x="1" y="16" width="13" height="1" fill="#e8e8e8"/>
 <rect x="15" y="18" width="1" height="21" fill="#555"/><rect x="2" y="38" width="14" height="2" fill="#666"/>
 <rect x="2" y="18" width="3" height="7" fill="#d4d4d4"/><rect x="6" y="18" width="3" height="7" fill="#d4d4d4"/><rect x="10" y="18" width="3" height="7" fill="#d4d4d4"/>
 <rect x="5" y="18" width="1" height="7" fill="#777"/><rect x="9" y="18" width="1" height="7" fill="#777"/><rect x="13" y="18" width="1" height="7" fill="#777"/>
 <rect x="1" y="25" width="14" height="1" fill="#777"/>
 <path d="M2 27h1v1h-1zM4 27h1v1h-1zM6 27h1v1h-1zM8 27h1v1h-1zM10 27h1v1h-1zM12 27h1v1h-1zM3 29h1v1h-1zM5 29h1v1h-1zM7 29h1v1h-1zM9 29h1v1h-1zM11 29h1v1h-1zM2 31h1v1h-1zM4 31h1v1h-1zM6 31h1v1h-1zM8 31h1v1h-1zM10 31h1v1h-1zM12 31h1v1h-1zM3 33h1v1h-1zM5 33h1v1h-1zM7 33h1v1h-1zM9 33h1v1h-1zM11 33h1v1h-1z" fill="#e4e4e4"/>
 </g>
 <path d="M24 12C24 7 31 4 37 4C43 4 47 6 46 9C45.500 11 42.500 11.500 43 13.500C43.500 15.500 45.500 15 45 17C44 19.500 37 20 32 19C27 18 24 16 24 12Z" fill="#dcdcdc" stroke="#444" stroke-width="1"/>
 <rect x="30" y="7" width="5" height="4" fill="#ff0"/><path d="M36.500 4.500h3.500v3.500h-3.500z" fill="#f0f"/><circle cx="27.500" cy="12.500" r="1.800" fill="#f00"/>
 <path d="M31 13h4v1h1v2h-1v1h-4v-1h-1v-2h1z" fill="#00f"/><path d="M37 13h4v4h-4z" fill="#0a0"/><path d="M37 13h1v1h-1zM39 13h1v1h-1zM38 14h1v1h-1zM40 14h1v1h-1zM37 15h1v1h-1zM39 15h1v1h-1zM38 16h1v1h-1zM40 16h1v1h-1z" fill="#00f"/>
 <path d="M37 9.500h3v1.500h-2v1h-1z" fill="#555"/>
 <g style="font-family:'Liberation Serif',serif;font-weight:bold">
 <text x="22" y="36.600" font-size="24" fill="#222" textLength="13" lengthAdjust="spacingAndGlyphs">T</text><text x="21" y="35.700" font-size="24" fill="#fff" textLength="13" lengthAdjust="spacingAndGlyphs">T</text>
 <text x="32.400" y="37.300" font-size="16" fill="#222" textLength="8" lengthAdjust="spacingAndGlyphs">T</text><text x="31.500" y="36.400" font-size="16" fill="#fff" textLength="8" lengthAdjust="spacingAndGlyphs">T</text>
 <text x="39.200" y="38.300" font-size="9.500" fill="#222" textLength="5.500" lengthAdjust="spacingAndGlyphs">T</text><text x="38.400" y="37.500" font-size="9.500" fill="#fff" textLength="5.500" lengthAdjust="spacingAndGlyphs">T</text>
 </g>
</svg>
<!-- app manager drawer -->
<svg style="left:807px;top:710px" width="44" height="46" viewBox="0 0 44 46">
 <g shape-rendering="crispEdges"><rect x="0" y="8" width="3" height="29" fill="#6C615B"/><rect x="0" y="8" width="18" height="6" fill="#6C615B"/>
 <rect x="7" y="2" width="5" height="13" fill="#eee"/><path d="M10 3h2v1h-2zM10 5h2v1h-2zM10 7h2v1h-2zM10 9h2v1h-2zM10 11h2v1h-2zM9 13h3v1h-3z" fill="#777"/>
 <rect x="16" y="1" width="12" height="14" fill="#8e8e8e"/><rect x="16" y="1" width="12" height="1" fill="#ccc"/><rect x="16" y="1" width="1" height="14" fill="#ccc"/><rect x="27" y="2" width="1" height="13" fill="#444"/><rect x="18" y="3" width="8" height="4" fill="#3a3a3a"/>
 <path d="M18 8h2v2h-2zM21 8h2v2h-2zM24 8h2v2h-2zM18 11h2v2h-2zM21 11h2v2h-2zM24 11h2v2h-2z" fill="#d0d0d0"/></g>
 <path d="M29 14.500L39.500 3" stroke="#ff0" stroke-width="2.600"/><path d="M30.200 15.300L40.500 4" stroke="#555" stroke-width=".8"/><path d="M38 4.500L40.500 2" stroke="#f0f" stroke-width="2.800"/>
 <g shape-rendering="crispEdges"><rect x="2" y="14" width="38" height="29" fill="#000"/><rect x="2" y="14" width="37" height="28" fill="#ADADAD"/><rect x="2" y="14" width="1" height="28" fill="#fff"/><rect x="2" y="14" width="37" height="1" fill="#f0f0f0"/>
 <rect x="40" y="19" width="3" height="26" fill="#6C615B"/><rect x="7" y="43" width="36" height="3" fill="#6C615B"/>
 <rect x="13" y="18" width="17" height="10" fill="#fff"/><rect x="14" y="19" width="15" height="3" fill="#0dd"/><path d="M14 19h1v1h-1zM16 19h1v1h-1zM18 19h1v1h-1zM20 19h1v1h-1zM22 19h1v1h-1zM24 19h1v1h-1zM26 19h1v1h-1zM28 19h1v1h-1zM15 20h1v1h-1zM17 20h1v1h-1zM19 20h1v1h-1zM21 20h1v1h-1zM23 20h1v1h-1zM25 20h1v1h-1zM27 20h1v1h-1zM14 21h1v1h-1zM16 21h1v1h-1zM18 21h1v1h-1zM20 21h1v1h-1zM22 21h1v1h-1zM24 21h1v1h-1zM26 21h1v1h-1zM28 21h1v1h-1z" fill="#ee4"/>
 <rect x="14" y="22" width="15" height="2" fill="#000"/><rect x="14" y="24" width="15" height="1" fill="#555"/><rect x="14" y="25" width="15" height="1" fill="#aaa"/><rect x="14" y="28" width="17" height="1" fill="#6C615B"/><rect x="30" y="19" width="1" height="10" fill="#6C615B"/></g>
</svg>
<!-- help books large -->
<svg style="left:866px;top:717px" width="42" height="36" viewBox="0 0 42 36" shape-rendering="crispEdges">
 <rect x="0" y="4" width="7" height="29" fill="#555"/><rect x="1" y="5" width="5" height="28" fill="#C4C4C4"/><rect x="2" y="8" width="3" height="1" fill="#777"/><rect x="2" y="10" width="3" height="3" fill="#999"/><rect x="2" y="15" width="3" height="2" fill="#999"/>
 <defs><pattern id="ck1" width="2" height="2" patternUnits="userSpaceOnUse"><rect x="0" y="0" width="1" height="1" fill="#0ee"/><rect x="1" y="1" width="1" height="1" fill="#0ee"/></pattern><pattern id="ck2" width="2" height="2" patternUnits="userSpaceOnUse"><rect x="0" y="0" width="1" height="1" fill="#f11"/><rect x="1" y="1" width="1" height="1" fill="#f11"/></pattern></defs>
 <rect x="6" y="1" width="9" height="32" fill="#333"/><rect x="7" y="2" width="7" height="31" fill="#5a5a5a"/><rect x="7" y="2" width="7" height="1" fill="#888"/>
 <rect x="8" y="3" width="3" height="29" fill="url(#ck1)"/><rect x="11" y="4" width="2" height="28" fill="url(#ck2)"/><path d="M11 3h1v1h-1zM10 5h1v1h-1zM10 9h1v1h-1zM10 13h1v1h-1zM10 17h1v1h-1zM10 21h1v1h-1zM10 25h1v1h-1zM10 29h1v1h-1z" fill="#f11"/>
 <rect x="14" y="3" width="10" height="30" fill="#444"/><rect x="15" y="4" width="8" height="29" fill="#808080"/><rect x="16" y="6" width="6" height="1" fill="#555"/><rect x="18" y="27" width="4" height="1" fill="#555"/>
 <rect x="23" y="4" width="6" height="29" fill="#222"/><path d="M24 5h1v1h-1zM26 5h1v1h-1zM25 6h1v1h-1zM27 6h1v1h-1zM24 7h1v1h-1zM26 7h1v1h-1zM25 8h1v1h-1zM27 8h1v1h-1zM24 9h1v1h-1zM26 9h1v1h-1zM25 10h1v1h-1zM27 10h1v1h-1zM24 11h1v1h-1zM26 11h1v1h-1zM25 12h1v1h-1zM27 12h1v1h-1zM24 13h1v1h-1zM26 13h1v1h-1zM25 14h1v1h-1zM27 14h1v1h-1zM24 15h1v1h-1zM26 15h1v1h-1zM25 16h1v1h-1zM27 16h1v1h-1zM24 17h1v1h-1zM26 17h1v1h-1zM25 18h1v1h-1zM27 18h1v1h-1zM24 19h1v1h-1zM26 19h1v1h-1zM25 20h1v1h-1zM27 20h1v1h-1zM24 21h1v1h-1zM26 21h1v1h-1zM25 22h1v1h-1zM27 22h1v1h-1zM24 23h1v1h-1zM26 23h1v1h-1zM25 24h1v1h-1zM27 24h1v1h-1zM24 25h1v1h-1zM26 25h1v1h-1zM25 26h1v1h-1zM27 26h1v1h-1zM24 27h1v1h-1zM26 27h1v1h-1zM25 28h1v1h-1zM27 28h1v1h-1zM24 29h1v1h-1zM26 29h1v1h-1zM25 30h1v1h-1zM27 30h1v1h-1z" fill="#22f"/>
 <path d="M25 6h1v1h-1zM27 9h1v1h-1zM25 12h1v1h-1zM27 15h1v1h-1zM25 18h1v1h-1zM27 21h1v1h-1zM25 24h1v1h-1zM27 27h1v1h-1z" fill="#ccc"/>
 <rect x="29" y="2" width="9" height="31" fill="#444"/><rect x="30" y="3" width="7" height="30" fill="#9c9c9c"/><rect x="30" y="3" width="1" height="30" fill="#c8c8c8"/><rect x="37" y="3" width="1" height="30" fill="#222"/>
 <path d="M33 8h1v1h-1zM33 11h1v3h-1zM33 17h1v1h-1zM33 24h1v1h-1z" fill="#555"/>
 <path d="M39 5h1v1h-1zM39 7h1v1h-1zM39 9h1v1h-1zM39 11h1v1h-1zM39 13h1v1h-1zM39 15h1v1h-1zM39 17h1v1h-1zM39 19h1v1h-1zM39 21h1v1h-1zM39 23h1v1h-1zM39 25h1v1h-1zM39 27h1v1h-1zM39 29h1v1h-1zM39 31h1v1h-1zM33 34h1v1h-1zM35 34h1v1h-1zM37 34h1v1h-1zM39 33h1v1h-1z" fill="#8f7f77"/>
 <rect x="0" y="32" width="38" height="1" fill="#222"/><rect x="1" y="33" width="30" height="1" fill="#f0e8e4"/>
 <path d="M13 13h1v-2h1v-1h1v-1h6v1h1v1h1v4h-1v1h-1v1h-1v1h-1v2h-3v-3h1v-1h1v-1h1v-1h1v-2h-4v2h-3zM17 22h3v3h-3z" fill="#fff"/>
</svg>
<!-- trash -->
<svg style="left:932px;top:717px" width="25" height="36" viewBox="0 0 25 36" shape-rendering="crispEdges">
 <rect x="1" y="0" width="21" height="35" fill="#6C615B"/>
 <rect x="2" y="1" width="20" height="6" fill="#D2D2D2"/><rect x="2" y="1" width="20" height="1" fill="#f4f4f4"/><rect x="2" y="6" width="20" height="1" fill="#999"/>
 <rect x="2" y="7" width="20" height="27" fill="#9A9A9A"/><rect x="2" y="7" width="2" height="25" fill="#c4c4c4"/>
 <rect x="22" y="2" width="1" height="32" fill="#fff"/><rect x="2" y="34" width="21" height="1" fill="#000"/>
 <rect x="9" y="30" width="8" height="2" fill="#fff"/><rect x="9" y="32" width="8" height="2" fill="#000"/><rect x="8" y="30" width="1" height="4" fill="#333"/><rect x="17" y="30" width="1" height="4" fill="#333"/>
 <path d="M1 32l3 3h-3z" fill="#C6B2A8" shape-rendering="auto"/>
</svg>
</div>
</body>
</html>
